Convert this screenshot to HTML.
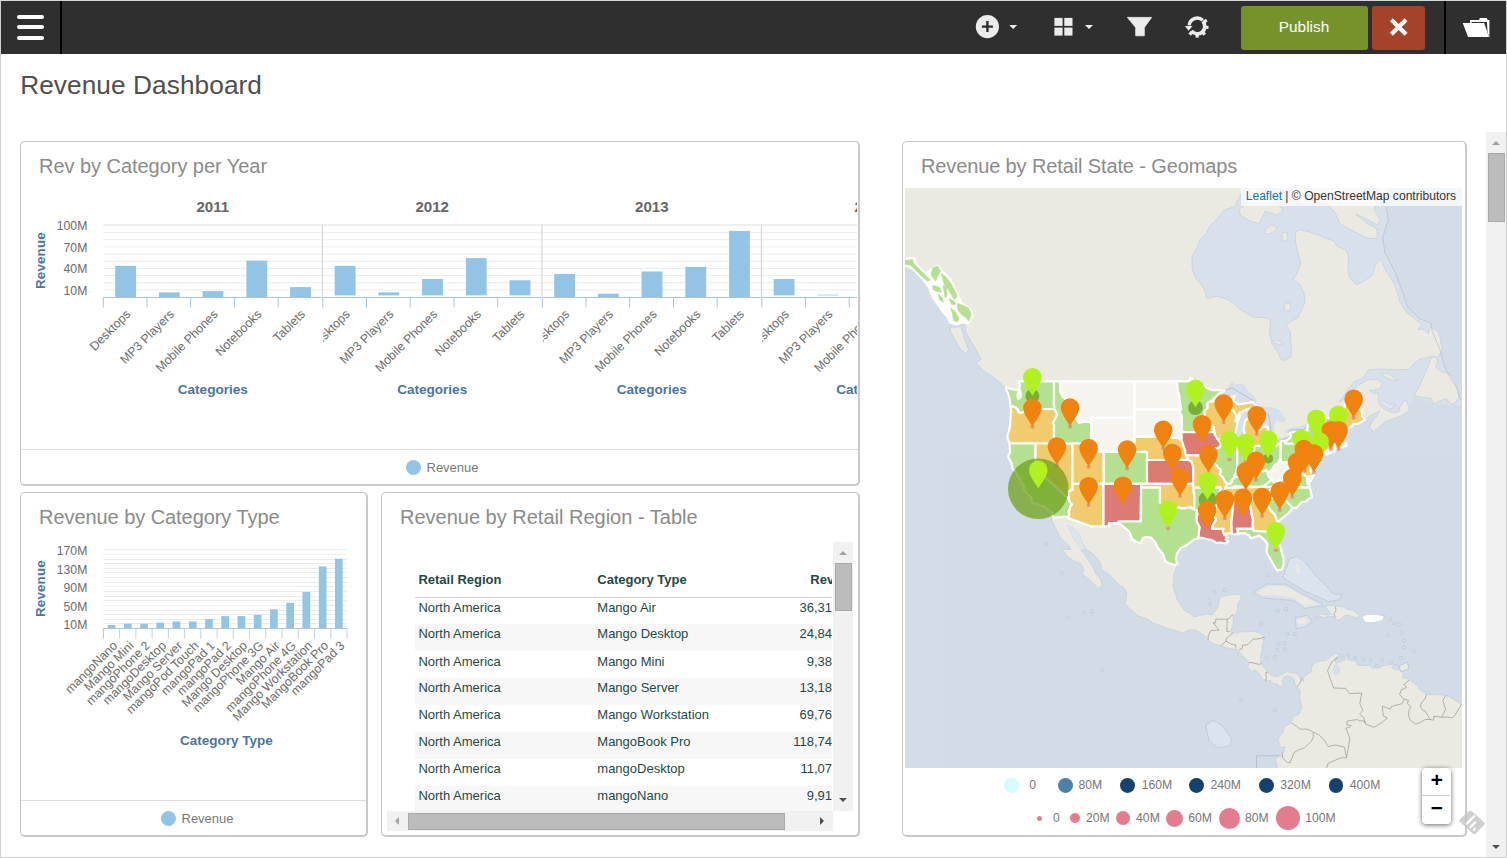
<!DOCTYPE html>
<html lang="en"><head><meta charset="utf-8"><title>Revenue Dashboard</title>
<style>
*{box-sizing:border-box;margin:0;padding:0}
html,body{width:1507px;height:858px;overflow:hidden;background:#fff;font-family:"Liberation Sans",Arial,sans-serif;}
body{position:relative}
.abs{position:absolute}
#frame{position:absolute;left:0;top:0;width:1507px;height:858px;border:1px solid #cfcfcf;border-top-color:#d8d8d8;pointer-events:none;z-index:50}
#nav{position:absolute;left:1px;top:1px;width:1505px;height:53px;background:#2f2f2f}
.sep{position:absolute;top:0;width:2px;height:53px;background:#000}
#title{position:absolute;left:20.2px;top:68px;font-size:26.25px;letter-spacing:.06px;line-height:34px;color:#4f4f4f;white-space:nowrap}
.panel{position:absolute;background:#fff;border:1px solid #c6c6c6;border-right:2px solid #c9c9c9;border-bottom:2px solid #c9c9c9;border-radius:5px}
.ptitle{position:absolute;left:18px;top:11.2px;font-size:20px;line-height:26px;color:#8b8b8b;white-space:nowrap}
.legline{position:absolute;left:0;right:0;height:1px;background:#dedede}
.legtxt{position:absolute;font-size:13px;line-height:15.4px;color:#777;white-space:nowrap}
.dot{position:absolute;border-radius:50%}
svg{position:absolute;overflow:hidden}
svg text{font-family:"Liberation Sans",Arial,sans-serif}
.btn{position:absolute;top:5px;height:44px;border-radius:3px;color:#fff;text-align:center}
table{border-collapse:collapse}
.sb{position:absolute;background:#f1f1f1}
.thumb{position:absolute;background:#bcbcbc;border:1px solid #a9a9a9}
.tri{position:absolute;width:0;height:0;border:4px solid transparent}
.trow{position:absolute;left:0;width:560px;white-space:nowrap;font-size:13px;color:#1f4848}
.trow span{position:absolute;top:0}
.zb{width:30.2px;height:27px;text-align:center;font:bold 21px/28.6px "Liberation Mono",monospace;color:#000}
</style></head><body>
<div id="nav">
<div class="abs" style="left:15.9px;top:14px;width:27px;height:4px;border-radius:2px;background:#fff"></div>
<div class="abs" style="left:15.9px;top:24px;width:27px;height:4px;border-radius:2px;background:#fff"></div>
<div class="abs" style="left:15.9px;top:34.5px;width:27px;height:4px;border-radius:2px;background:#fff"></div>
<div class="sep" style="left:59px"></div>
<svg style="left:0;top:0" width="1505" height="53" viewBox="1 1 1505 53">
<circle cx="987.4" cy="26.6" r="11.6" fill="#ececec"/>
<path d="M981.9 26.6h11M987.4 21.1v11" stroke="#2f2f2f" stroke-width="2.4" fill="none"/>
<path d="M1009.2 24.9h8l-4 4.1z" fill="#f2f2f2"/>
<rect x="1054.4" y="17.9" width="8.2" height="8" fill="#ececec"/>
<rect x="1054.4" y="27.6" width="8.2" height="8" fill="#ececec"/>
<rect x="1064.3" y="17.9" width="8.2" height="8" fill="#ececec"/>
<rect x="1064.3" y="27.6" width="8.2" height="8" fill="#ececec"/>
<path d="M1085 24.9h8l-4 4.1z" fill="#f2f2f2"/>
<path d="M1127.4 17.4h24.2l-7.3 10.2v8.2h-8.6v-8.2z" fill="#ececec" stroke="#ececec" stroke-width="0.8" stroke-linejoin="round"/>
<g fill="none" stroke="#ececec"><path d="M1189.14 25.44A8.2 8.2 0 0 1 1202.79 20.21" stroke-width="3.3"/><path d="M1202.87 21.28A7.5 7.5 0 1 1 1191.39 30.92" stroke-width="3.7"/></g><g fill="#ececec"><rect x="-1.7" y="-1.6" width="3.4" height="3.2" transform="translate(1205.35 21.07) rotate(-33)"/><rect x="-1.7" y="-1.6" width="3.4" height="3.2" transform="translate(1206.85 27.30) rotate(6)"/><rect x="-1.7" y="-1.6" width="3.4" height="3.2" transform="translate(1203.72 33.43) rotate(48)"/><rect x="-1.7" y="-1.6" width="3.4" height="3.2" transform="translate(1197.13 35.90) rotate(91)"/><rect x="-1.7" y="-1.6" width="3.4" height="3.2" transform="translate(1190.75 33.32) rotate(133)"/><path d="M1184.9 25.9h7.6l-3.9 4.9z"/></g>

<g fill="#fff">
<path d="M1462.7 23.1H1484.2L1489 36.9H1468.1z"/>
<path d="M1470 20.1H1479.2L1479.7 18.1H1486.8L1487.6 19.9H1489.4V36.9H1489L1487.5 31.4L1486.9 21.9H1471.6V23.1H1470z"/>
</g>

</svg>
<div class="btn" style="left:1240px;width:127px;background:#76932b;font-size:15.4px;line-height:42.6px;text-indent:-1px">Publish</div>
<div class="btn" style="left:1371px;width:53px;background:#a5432a"></div>
<svg style="left:1371px;top:5px" width="53" height="44" viewBox="1372 6 53 44"><path d="M1391.4 19.8l14.6 14.4M1406 19.8l-14.6 14.4" stroke="#fff" stroke-width="4.2" fill="none"/></svg>
<div class="sep" style="left:1443px"></div>
</div>
<div id="title">Revenue Dashboard</div>
<div class="panel" style="left:20px;top:141px;width:840px;height:345px"><div class="ptitle" style="letter-spacing:-0.04px">Rev by Category per Year</div>
<div class="legline" style="top:307px"></div><div class="dot" style="left:385px;top:318px;width:15px;height:15px;background:#92c4e5"></div><div class="legtxt" style="left:405.5px;top:317.5px">Revenue</div></div>
<svg style="left:21px;top:142px" width="836" height="307" viewBox="21 142 836 307">
<path d="M103.3 224.5H860" stroke="#efefef" stroke-width="1"/>
<path d="M103.3 289.93H860" stroke="#ececec" stroke-width="1"/>
<path d="M103.3 282.76H860" stroke="#ececec" stroke-width="1"/>
<path d="M103.3 275.59H860" stroke="#ececec" stroke-width="1"/>
<path d="M103.3 268.42H860" stroke="#ececec" stroke-width="1"/>
<path d="M103.3 261.25H860" stroke="#ececec" stroke-width="1"/>
<path d="M103.3 254.08H860" stroke="#ececec" stroke-width="1"/>
<path d="M103.3 246.91H860" stroke="#ececec" stroke-width="1"/>
<path d="M103.3 239.74H860" stroke="#ececec" stroke-width="1"/>
<path d="M103.3 232.57H860" stroke="#ececec" stroke-width="1"/>
<path d="M103.3 225.40H860" stroke="#ececec" stroke-width="1"/>
<rect x="115.2" y="265.9" width="20.8" height="31.1" fill="#92c4e5"/>
<rect x="158.9" y="292.4" width="20.8" height="4.6" fill="#92c4e5"/>
<rect x="202.6" y="291.1" width="20.8" height="5.9" fill="#92c4e5"/>
<rect x="246.4" y="260.6" width="20.8" height="36.4" fill="#92c4e5"/>
<rect x="290.1" y="287.1" width="20.8" height="9.9" fill="#92c4e5"/>
<path d="M103.3 297.5H321.6" stroke="#a9c4df" stroke-width="1"/>
<path d="M103.3 297.5V307.5" stroke="#a9c4df" stroke-width="1"/>
<path d="M147.0 297.5V307.5" stroke="#a9c4df" stroke-width="1"/>
<path d="M190.7 297.5V307.5" stroke="#a9c4df" stroke-width="1"/>
<path d="M234.5 297.5V307.5" stroke="#a9c4df" stroke-width="1"/>
<path d="M278.2 297.5V307.5" stroke="#a9c4df" stroke-width="1"/>
<text x="212.8" y="212" text-anchor="middle" font-size="15.1" font-weight="bold" fill="#666">2011</text>
<text x="212.8" y="393.7" text-anchor="middle" font-size="13.55" font-weight="bold" fill="#4a74a3">Categories</text>
<clipPath id="c1p0"><rect x="103.8" y="298" width="219.5" height="80"/></clipPath>
<g>
<text transform="translate(131.2 314.9) rotate(-45)" text-anchor="end" font-size="12.4" fill="#6b6b6b">Desktops</text>
<text transform="translate(174.9 314.9) rotate(-45)" text-anchor="end" font-size="12.4" fill="#6b6b6b">MP3 Players</text>
<text transform="translate(218.6 314.9) rotate(-45)" text-anchor="end" font-size="12.4" fill="#6b6b6b">Mobile Phones</text>
<text transform="translate(262.3 314.9) rotate(-45)" text-anchor="end" font-size="12.4" fill="#6b6b6b">Notebooks</text>
<text transform="translate(306.0 314.9) rotate(-45)" text-anchor="end" font-size="12.4" fill="#6b6b6b">Tablets</text>
</g>
<path d="M322.4 224.5V297.5" stroke="#cfcfcf" stroke-width="1"/>
<rect x="334.7" y="265.9" width="20.8" height="29.5" fill="#92c4e5"/>
<rect x="378.4" y="292.4" width="20.8" height="3.0" fill="#92c4e5"/>
<rect x="422.1" y="279.0" width="20.8" height="16.4" fill="#92c4e5"/>
<rect x="465.9" y="258.1" width="20.8" height="37.3" fill="#92c4e5"/>
<rect x="509.6" y="280.3" width="20.8" height="15.1" fill="#92c4e5"/>
<path d="M322.8 297.5H541.1" stroke="#a9c4df" stroke-width="1"/>
<path d="M322.8 297.5V307.5" stroke="#a9c4df" stroke-width="1"/>
<path d="M366.5 297.5V307.5" stroke="#a9c4df" stroke-width="1"/>
<path d="M410.2 297.5V307.5" stroke="#a9c4df" stroke-width="1"/>
<path d="M454.0 297.5V307.5" stroke="#a9c4df" stroke-width="1"/>
<path d="M497.7 297.5V307.5" stroke="#a9c4df" stroke-width="1"/>
<text x="432.2" y="212" text-anchor="middle" font-size="15.1" font-weight="bold" fill="#666">2012</text>
<text x="432.2" y="393.7" text-anchor="middle" font-size="13.55" font-weight="bold" fill="#4a74a3">Categories</text>
<clipPath id="c1p1"><rect x="323.3" y="298" width="219.5" height="80"/></clipPath>
<g clip-path="url(#c1p1)">
<text transform="translate(350.7 314.9) rotate(-45)" text-anchor="end" font-size="12.4" fill="#6b6b6b">Desktops</text>
<text transform="translate(394.4 314.9) rotate(-45)" text-anchor="end" font-size="12.4" fill="#6b6b6b">MP3 Players</text>
<text transform="translate(438.1 314.9) rotate(-45)" text-anchor="end" font-size="12.4" fill="#6b6b6b">Mobile Phones</text>
<text transform="translate(481.8 314.9) rotate(-45)" text-anchor="end" font-size="12.4" fill="#6b6b6b">Notebooks</text>
<text transform="translate(525.5 314.9) rotate(-45)" text-anchor="end" font-size="12.4" fill="#6b6b6b">Tablets</text>
</g>
<path d="M541.9 224.5V297.5" stroke="#cfcfcf" stroke-width="1"/>
<rect x="554.2" y="274.0" width="20.8" height="23.0" fill="#92c4e5"/>
<rect x="597.9" y="293.7" width="20.8" height="3.3" fill="#92c4e5"/>
<rect x="641.6" y="271.5" width="20.8" height="25.5" fill="#92c4e5"/>
<rect x="685.4" y="266.9" width="20.8" height="30.1" fill="#92c4e5"/>
<rect x="729.1" y="230.9" width="20.8" height="66.1" fill="#92c4e5"/>
<path d="M542.3 297.5H760.6" stroke="#a9c4df" stroke-width="1"/>
<path d="M542.3 297.5V307.5" stroke="#a9c4df" stroke-width="1"/>
<path d="M586.0 297.5V307.5" stroke="#a9c4df" stroke-width="1"/>
<path d="M629.7 297.5V307.5" stroke="#a9c4df" stroke-width="1"/>
<path d="M673.5 297.5V307.5" stroke="#a9c4df" stroke-width="1"/>
<path d="M717.2 297.5V307.5" stroke="#a9c4df" stroke-width="1"/>
<text x="651.8" y="212" text-anchor="middle" font-size="15.1" font-weight="bold" fill="#666">2013</text>
<text x="651.8" y="393.7" text-anchor="middle" font-size="13.55" font-weight="bold" fill="#4a74a3">Categories</text>
<clipPath id="c1p2"><rect x="542.8" y="298" width="219.5" height="80"/></clipPath>
<g clip-path="url(#c1p2)">
<text transform="translate(570.2 314.9) rotate(-45)" text-anchor="end" font-size="12.4" fill="#6b6b6b">Desktops</text>
<text transform="translate(613.9 314.9) rotate(-45)" text-anchor="end" font-size="12.4" fill="#6b6b6b">MP3 Players</text>
<text transform="translate(657.6 314.9) rotate(-45)" text-anchor="end" font-size="12.4" fill="#6b6b6b">Mobile Phones</text>
<text transform="translate(701.3 314.9) rotate(-45)" text-anchor="end" font-size="12.4" fill="#6b6b6b">Notebooks</text>
<text transform="translate(745.0 314.9) rotate(-45)" text-anchor="end" font-size="12.4" fill="#6b6b6b">Tablets</text>
</g>
<path d="M761.4 224.5V297.5" stroke="#cfcfcf" stroke-width="1"/>
<rect x="773.7" y="279.0" width="20.8" height="16.4" fill="#92c4e5"/>
<rect x="817.4" y="294.7" width="20.8" height="0.7" fill="#92c4e5"/>
<path d="M761.8 297.5H980.1" stroke="#a9c4df" stroke-width="1"/>
<path d="M761.8 297.5V307.5" stroke="#a9c4df" stroke-width="1"/>
<path d="M805.5 297.5V307.5" stroke="#a9c4df" stroke-width="1"/>
<path d="M849.2 297.5V307.5" stroke="#a9c4df" stroke-width="1"/>
<path d="M893.0 297.5V307.5" stroke="#a9c4df" stroke-width="1"/>
<path d="M936.7 297.5V307.5" stroke="#a9c4df" stroke-width="1"/>
<path d="M979.8 297.5V307.5" stroke="#a9c4df" stroke-width="1"/>
<text x="871.2" y="212" text-anchor="middle" font-size="15.1" font-weight="bold" fill="#666">2014</text>
<text x="871.2" y="393.7" text-anchor="middle" font-size="13.55" font-weight="bold" fill="#4a74a3">Categories</text>
<clipPath id="c1p3"><rect x="762.3" y="298" width="219.5" height="80"/></clipPath>
<g clip-path="url(#c1p3)">
<text transform="translate(789.7 314.9) rotate(-45)" text-anchor="end" font-size="12.4" fill="#6b6b6b">Desktops</text>
<text transform="translate(833.4 314.9) rotate(-45)" text-anchor="end" font-size="12.4" fill="#6b6b6b">MP3 Players</text>
<text transform="translate(877.1 314.9) rotate(-45)" text-anchor="end" font-size="12.4" fill="#6b6b6b">Mobile Phones</text>
<text transform="translate(920.8 314.9) rotate(-45)" text-anchor="end" font-size="12.4" fill="#6b6b6b">Notebooks</text>
<text transform="translate(964.5 314.9) rotate(-45)" text-anchor="end" font-size="12.4" fill="#6b6b6b">Tablets</text>
</g>
<text x="87.3" y="230.2" text-anchor="end" font-size="12.2" fill="#6b6b6b">100M</text>
<text x="87.3" y="251.7" text-anchor="end" font-size="12.2" fill="#6b6b6b">70M</text>
<text x="87.3" y="273.2" text-anchor="end" font-size="12.2" fill="#6b6b6b">40M</text>
<text x="87.3" y="294.7" text-anchor="end" font-size="12.2" fill="#6b6b6b">10M</text>
<text transform="translate(44.6 260.6) rotate(-90)" text-anchor="middle" letter-spacing="0.2" font-size="13.3" font-weight="bold" fill="#4a74a3">Revenue</text>
</svg>
<div class="panel" style="left:20px;top:492px;width:348px;height:345px"><div class="ptitle" style="letter-spacing:-0.06px">Revenue by Category Type</div>
<div class="legline" style="top:307px"></div><div class="dot" style="left:140px;top:318px;width:15px;height:15px;background:#92c4e5"></div><div class="legtxt" style="left:160.5px;top:317.5px">Revenue</div></div>
<svg style="left:21px;top:493px" width="345" height="307" viewBox="21 493 345 307">
<path d="M103.4 623.5H347.0" stroke="#ececec" stroke-width="1"/>
<path d="M103.4 619.5H347.0" stroke="#ececec" stroke-width="1"/>
<path d="M103.4 614.5H347.0" stroke="#ececec" stroke-width="1"/>
<path d="M103.4 610.5H347.0" stroke="#ececec" stroke-width="1"/>
<path d="M103.4 605.5H347.0" stroke="#ececec" stroke-width="1"/>
<path d="M103.4 600.5H347.0" stroke="#ececec" stroke-width="1"/>
<path d="M103.4 596.5H347.0" stroke="#ececec" stroke-width="1"/>
<path d="M103.4 591.5H347.0" stroke="#ececec" stroke-width="1"/>
<path d="M103.4 586.5H347.0" stroke="#ececec" stroke-width="1"/>
<path d="M103.4 582.5H347.0" stroke="#ececec" stroke-width="1"/>
<path d="M103.4 577.5H347.0" stroke="#ececec" stroke-width="1"/>
<path d="M103.4 572.5H347.0" stroke="#ececec" stroke-width="1"/>
<path d="M103.4 568.5H347.0" stroke="#ececec" stroke-width="1"/>
<path d="M103.4 563.5H347.0" stroke="#ececec" stroke-width="1"/>
<path d="M103.4 559.5H347.0" stroke="#ececec" stroke-width="1"/>
<path d="M103.4 554.5H347.0" stroke="#ececec" stroke-width="1"/>
<path d="M103.4 549.5H347.0" stroke="#ececec" stroke-width="1"/>
<rect x="107.7" y="625.0" width="7.7" height="3.0" fill="#92c4e5"/>
<rect x="123.9" y="623.8" width="7.7" height="4.2" fill="#92c4e5"/>
<rect x="140.2" y="623.8" width="7.7" height="4.2" fill="#92c4e5"/>
<rect x="156.4" y="622.6" width="7.7" height="5.4" fill="#92c4e5"/>
<rect x="172.6" y="621.5" width="7.7" height="6.5" fill="#92c4e5"/>
<rect x="188.9" y="621.5" width="7.7" height="6.5" fill="#92c4e5"/>
<rect x="205.1" y="619.1" width="7.7" height="8.9" fill="#92c4e5"/>
<rect x="221.3" y="616.1" width="7.7" height="11.9" fill="#92c4e5"/>
<rect x="237.6" y="616.1" width="7.7" height="11.9" fill="#92c4e5"/>
<rect x="253.8" y="614.9" width="7.7" height="13.1" fill="#92c4e5"/>
<rect x="270.1" y="609.3" width="7.7" height="18.7" fill="#92c4e5"/>
<rect x="286.3" y="602.8" width="7.7" height="25.2" fill="#92c4e5"/>
<rect x="302.5" y="591.9" width="7.7" height="36.1" fill="#92c4e5"/>
<rect x="318.8" y="566.5" width="7.7" height="61.5" fill="#92c4e5"/>
<rect x="335.0" y="558.8" width="7.7" height="69.2" fill="#92c4e5"/>
<path d="M103.4 628.5H347.0" stroke="#a9c4df" stroke-width="1"/>
<path d="M103.4 628.5V638.5" stroke="#a9c4df" stroke-width="1" opacity="1"/>
<path d="M119.6 628.5V638.5" stroke="#a9c4df" stroke-width="1" opacity="0.75"/>
<path d="M135.9 628.5V638.5" stroke="#a9c4df" stroke-width="1" opacity="0.75"/>
<path d="M152.1 628.5V638.5" stroke="#a9c4df" stroke-width="1" opacity="0.75"/>
<path d="M168.4 628.5V638.5" stroke="#a9c4df" stroke-width="1" opacity="0.75"/>
<path d="M184.6 628.5V638.5" stroke="#a9c4df" stroke-width="1" opacity="0.75"/>
<path d="M200.8 628.5V638.5" stroke="#a9c4df" stroke-width="1" opacity="0.75"/>
<path d="M217.1 628.5V638.5" stroke="#a9c4df" stroke-width="1" opacity="0.75"/>
<path d="M233.3 628.5V638.5" stroke="#a9c4df" stroke-width="1" opacity="0.75"/>
<path d="M249.6 628.5V638.5" stroke="#a9c4df" stroke-width="1" opacity="0.75"/>
<path d="M265.8 628.5V638.5" stroke="#a9c4df" stroke-width="1" opacity="0.75"/>
<path d="M282.0 628.5V638.5" stroke="#a9c4df" stroke-width="1" opacity="0.75"/>
<path d="M298.3 628.5V638.5" stroke="#a9c4df" stroke-width="1" opacity="0.75"/>
<path d="M314.5 628.5V638.5" stroke="#a9c4df" stroke-width="1" opacity="0.75"/>
<path d="M330.8 628.5V638.5" stroke="#a9c4df" stroke-width="1" opacity="0.75"/>
<path d="M347.0 628.5V638.5" stroke="#a9c4df" stroke-width="1" opacity="0.75"/>
<text transform="translate(118.1 646.4) rotate(-45)" text-anchor="end" font-size="12.4" fill="#6b6b6b">mangoNano</text>
<text transform="translate(134.4 646.4) rotate(-45)" text-anchor="end" font-size="12.4" fill="#6b6b6b">Mango Mini</text>
<text transform="translate(150.6 646.4) rotate(-45)" text-anchor="end" font-size="12.4" fill="#6b6b6b">mangoPhone 2</text>
<text transform="translate(166.8 646.4) rotate(-45)" text-anchor="end" font-size="12.4" fill="#6b6b6b">mangoDesktop</text>
<text transform="translate(183.1 646.4) rotate(-45)" text-anchor="end" font-size="12.4" fill="#6b6b6b">Mango Server</text>
<text transform="translate(199.3 646.4) rotate(-45)" text-anchor="end" font-size="12.4" fill="#6b6b6b">mangoPod Touch</text>
<text transform="translate(215.6 646.4) rotate(-45)" text-anchor="end" font-size="12.4" fill="#6b6b6b">mangoPad 1</text>
<text transform="translate(231.8 646.4) rotate(-45)" text-anchor="end" font-size="12.4" fill="#6b6b6b">mangoPad 2</text>
<text transform="translate(248.0 646.4) rotate(-45)" text-anchor="end" font-size="12.4" fill="#6b6b6b">Mango Desktop</text>
<text transform="translate(264.3 646.4) rotate(-45)" text-anchor="end" font-size="12.4" fill="#6b6b6b">mangoPhone 3G</text>
<text transform="translate(280.5 646.4) rotate(-45)" text-anchor="end" font-size="12.4" fill="#6b6b6b">Mango Air</text>
<text transform="translate(296.8 646.4) rotate(-45)" text-anchor="end" font-size="12.4" fill="#6b6b6b">mangoPhone 4G</text>
<text transform="translate(313.0 646.4) rotate(-45)" text-anchor="end" font-size="12.4" fill="#6b6b6b">Mango Workstation</text>
<text transform="translate(329.2 646.4) rotate(-45)" text-anchor="end" font-size="12.4" fill="#6b6b6b">MangoBook Pro</text>
<text transform="translate(345.5 646.4) rotate(-45)" text-anchor="end" font-size="12.4" fill="#6b6b6b">mangoPad 3</text>
<text x="87.3" y="555.2" text-anchor="end" font-size="12.2" fill="#6b6b6b">170M</text>
<text x="87.3" y="573.7" text-anchor="end" font-size="12.2" fill="#6b6b6b">130M</text>
<text x="87.3" y="592.2" text-anchor="end" font-size="12.2" fill="#6b6b6b">90M</text>
<text x="87.3" y="610.7" text-anchor="end" font-size="12.2" fill="#6b6b6b">50M</text>
<text x="87.3" y="629.2" text-anchor="end" font-size="12.2" fill="#6b6b6b">10M</text>
<text transform="translate(44.6 588.6) rotate(-90)" text-anchor="middle" letter-spacing="0.2" font-size="13.3" font-weight="bold" fill="#4a74a3">Revenue</text>
<text x="226.3" y="744.9" text-anchor="middle" font-size="13.5" font-weight="bold" fill="#4a74a3">Category Type</text>
</svg>
<div class="panel" style="left:381px;top:492px;width:479px;height:345px"><div class="ptitle">Revenue by Retail Region - Table</div>
<div class="abs" style="left:5px;top:49px;width:466px;height:289px;overflow:hidden">
<div class="abs" style="left:0;top:0;width:445px;height:269px;overflow:hidden">
<div class="trow" style="top:28.8px;height:26px;line-height:18px;font-weight:bold;left:28px"><span style="left:3.4px">Retail Region</span><span style="left:182.3px">Category Type</span><span style="right:110.5px">Revenue</span></div>
<div class="abs" style="left:28px;top:55px;width:520px;height:1px;background:#cfcfcf"></div>
<div class="trow" style="left:28px;top:56px;height:26.299999999999997px;background:#fff;line-height:18px"><span style="left:3.4px;top:1.0px">North America</span><span style="left:182.3px;top:1.0px">Mango Air</span><span style="right:110.5px;top:1.0px">36,317,506</span></div>
<div class="trow" style="left:28px;top:82.3px;height:27.200000000000003px;background:#f7f7f7;line-height:18px"><span style="left:3.4px;top:0.8px">North America</span><span style="left:182.3px;top:0.8px">Mango Desktop</span><span style="right:110.5px;top:0.8px">24,846,331</span></div>
<div class="trow" style="left:28px;top:109.5px;height:26.5px;background:#fff;line-height:18px"><span style="left:3.4px;top:1.2px">North America</span><span style="left:182.3px;top:1.2px">Mango Mini</span><span style="right:110.5px;top:1.2px">9,384,275</span></div>
<div class="trow" style="left:28px;top:136px;height:27px;background:#f7f7f7;line-height:18px"><span style="left:3.4px;top:0.6px">North America</span><span style="left:182.3px;top:0.6px">Mango Server</span><span style="right:110.5px;top:0.6px">13,186,940</span></div>
<div class="trow" style="left:28px;top:163px;height:27px;background:#fff;line-height:18px"><span style="left:3.4px;top:0.6px">North America</span><span style="left:182.3px;top:0.6px">Mango Workstation</span><span style="right:110.5px;top:0.6px">69,764,212</span></div>
<div class="trow" style="left:28px;top:190px;height:27px;background:#f7f7f7;line-height:18px"><span style="left:3.4px;top:0.6px">North America</span><span style="left:182.3px;top:0.6px">MangoBook Pro</span><span style="right:110.5px;top:0.6px">118,747,903</span></div>
<div class="trow" style="left:28px;top:217px;height:27px;background:#fff;line-height:18px"><span style="left:3.4px;top:0.6px">North America</span><span style="left:182.3px;top:0.6px">mangoDesktop</span><span style="right:110.5px;top:0.6px">11,075,628</span></div>
<div class="trow" style="left:28px;top:244px;height:27px;background:#f7f7f7;line-height:18px"><span style="left:3.4px;top:0.6px">North America</span><span style="left:182.3px;top:0.6px">mangoNano</span><span style="right:110.5px;top:0.6px">9,916,454</span></div>
</div>
<div class="sb" style="left:446px;top:0;width:20px;height:269px"><div class="tri" style="left:6.4px;top:5px;border-bottom:4.5px solid #a3a3a3"></div><div class="thumb" style="left:2px;top:21px;width:17px;height:48px"></div><div class="tri" style="left:6.4px;top:256px;border-top:4.5px solid #505050"></div></div>
<div class="sb" style="left:0;top:269px;width:446px;height:20px"><div class="tri" style="left:4px;top:6.4px;border-right:4.5px solid #a3a3a3"></div><div class="thumb" style="left:21px;top:2px;width:377px;height:17px"></div><div class="tri" style="left:433px;top:6.4px;border-left:4.5px solid #505050"></div></div>
</div>
</div>
<div class="panel" style="left:902px;top:141px;width:565px;height:696px"><div class="ptitle" style="letter-spacing:-0.125px">Revenue by Retail State - Geomaps</div></div>
<svg id="map" style="left:905px;top:188px" width="557" height="580" viewBox="905 188 557 580">
<rect x="905" y="188" width="557" height="580" fill="#d3dde7"/>
<rect x="940.7" y="452.4" width="600" height="400" fill="#d1dce7"/>
<path d="M1386.4 206.5L1388.2 220.1L1382.7 237.4L1384.7 252.3L1395.1 272.0L1402.5 291.8L1407.4 306.6L1419.8 319.0L1430.9 322.7L1432.2 331.4L1439.6 348.7L1444.5 366.0L1450.7 378.3L1456.9 388.2L1460.6 400.1L1462.0 405.0L1454.5 405.0L1435.0 404.0L1414.0 397.0L1409.0 409.0L1340.0 425.0L1185.0 425.0L1185.0 188.0L1386.0 188.0Z" fill="#d8e1eb"/>
<g fill="#dbe4ed" stroke="#b9c6d7" stroke-width="0.8" stroke-linejoin="round">
<path d="M1253.4 592.3L1266.8 584.2L1285.6 584.2L1301.7 593.6L1320.5 603.0L1323.1 605.7L1304.4 608.4L1293.6 600.3L1274.9 599.0L1261.5 597.7Z"/>
<path d="M1282.9 577.5L1289.6 558.8L1297.7 556.1L1305.7 562.8L1315.1 574.9L1328.5 588.3L1332.5 593.6L1341.9 595.0L1339.8 599.5L1328.5 601.7L1320.5 597.7L1304.4 591.0L1291.0 582.9Z"/>
<path d="M1295.0 617.8L1307.0 615.1L1312.4 621.8L1304.4 627.2L1296.3 628.5Z"/>
<path d="M1205.6 725.0L1213.6 720.2L1223.0 726.3L1231.6 738.4L1229.7 745.9L1217.7 747.8L1209.1 741.1Z"/>
<path d="M1398.8 666.0L1407.6 662.0L1408.9 668.7L1400.9 671.9Z"/>
<circle cx="1383.5" cy="616.4" r="1.5"/>
<circle cx="1390.2" cy="619.1" r="1.5"/>
<circle cx="1394.2" cy="623.1" r="1.5"/>
<circle cx="1399.6" cy="624.5" r="1.5"/>
<circle cx="1401.7" cy="632.5" r="1.5"/>
<circle cx="1404.1" cy="640.6" r="1.5"/>
<circle cx="1404.1" cy="647.3" r="1.5"/>
<circle cx="1400.9" cy="658.0" r="1.5"/>
<circle cx="1413.8" cy="651.3" r="1.5"/>
<circle cx="1388.3" cy="634.7" r="1.5"/>
<circle cx="1382.1" cy="659.9" r="1.5"/>
<circle cx="1391.5" cy="663.4" r="1.5"/>
<circle cx="1376.8" cy="666.0" r="1.5"/>
<circle cx="1341.9" cy="655.8" r="1.5"/>
<circle cx="1348.6" cy="655.3" r="1.5"/>
<circle cx="1355.8" cy="658.0" r="1.5"/>
<circle cx="1363.4" cy="659.3" r="1.5"/>
<circle cx="1370.9" cy="660.1" r="1.5"/>
<circle cx="1277.5" cy="611.1" r="1.5"/>
<circle cx="1286.1" cy="609.2" r="1.5"/>
<circle cx="1260.9" cy="623.9" r="1.5"/>
<circle cx="1287.7" cy="634.4" r="1.5"/>
<circle cx="1294.4" cy="633.9" r="1.5"/>
<circle cx="1278.3" cy="644.0" r="1.5"/>
<circle cx="1284.2" cy="643.2" r="1.5"/>
<circle cx="1277.0" cy="649.9" r="1.5"/>
<circle cx="1285.1" cy="649.1" r="1.5"/>
<circle cx="1274.9" cy="656.7" r="1.5"/>
<circle cx="1316.4" cy="617.8" r="1.5"/>
<circle cx="1266.8" cy="657.2" r="1.5"/>
<circle cx="1275.4" cy="709.8" r="1.5"/>
<circle cx="1268.2" cy="574.9" r="1.5"/>
<circle cx="1045.5" cy="544.0" r="1.5"/>
<circle cx="1061.6" cy="573.0" r="1.5"/>
<circle cx="1067.5" cy="617.7" r="1.5"/>
<circle cx="1084.4" cy="612.9" r="1.5"/>
<circle cx="1091.7" cy="614.5" r="1.5"/>
<circle cx="1092.2" cy="611.0" r="1.5"/>
<circle cx="1102.4" cy="670.0" r="1.5"/>
<circle cx="1209.1" cy="600.3" r="1.5"/>
<circle cx="1214.2" cy="592.3" r="1.5"/>
<circle cx="1224.9" cy="590.1" r="1.5"/>
<circle cx="1210.2" cy="605.1" r="1.5"/>
<circle cx="1261.1" cy="623.9" r="1.5"/>
<circle cx="1277.5" cy="611.0" r="1.5"/>
<circle cx="1286.0" cy="608.9" r="1.5"/>
<circle cx="1287.4" cy="634.4" r="1.5"/>
<circle cx="1294.6" cy="633.8" r="1.5"/>
<circle cx="1275.3" cy="709.4" r="1.5"/>
<circle cx="1241.3" cy="700.1" r="1.5"/>
</g>
<g fill="#ebeae2" stroke="#c2cedc" stroke-opacity="0.8" stroke-width="0.9" stroke-linejoin="round">
<path d="M873.9 250.1L905.0 266.0L912.0 269.0L921.8 278.2L929.2 288.4L933.0 297.8L942.3 311.7L946.9 316.4L949.7 322.9L956.2 324.8L964.6 323.8L966.5 333.2L973.9 346.2L981.4 359.2L975.8 363.0L983.3 370.4L994.4 377.9L1003.0 385.5L1006.1 387.2L1006.1 387.2L1006.3 389.8L1008.2 393.5L1009.4 398.1L1010.0 400.8L1010.2 403.1L1010.5 406.7L1010.5 406.7L1011.0 409.0L1011.0 413.4L1010.3 420.5L1010.0 426.5L1008.8 431.7L1007.2 436.5L1008.2 439.3L1009.4 443.5L1009.4 443.5L1009.7 447.7L1010.0 452.2L1008.2 456.3L1008.8 458.0L1011.9 464.0L1012.5 468.9L1016.9 473.6L1017.2 476.0L1020.0 478.0L1020.6 482.3L1022.4 484.2L1024.3 485.4L1023.4 486.9L1023.7 489.2L1027.4 493.9L1031.5 498.1L1031.6 502.2L1032.7 503.3L1038.0 503.7L1040.5 505.6L1044.5 506.5L1045.4 507.5L1046.1 508.8L1049.2 510.1L1052.3 512.7L1052.6 515.3L1053.4 517.7L1053.4 517.7L1050.8 518.6L1054.4 525.6L1060.8 538.5L1068.5 544.9L1071.0 549.4L1062.0 549.4L1067.2 556.4L1074.9 561.5L1081.3 564.1L1083.8 569.2L1082.6 574.4L1087.7 578.2L1094.1 584.6L1098.0 588.5L1102.4 584.6L1099.9 578.2L1095.4 573.1L1092.8 566.7L1087.7 559.0L1081.3 550.0L1083.8 548.1L1074.9 541.0L1068.5 526.9L1067.2 525.6L1072.3 527.6L1078.7 533.3L1082.6 543.6L1086.4 549.4L1092.8 553.8L1100.5 562.8L1101.8 569.9L1109.5 574.4L1117.2 583.3L1124.3 588.1L1126.8 594.1L1125.6 601.4L1124.3 602.1L1128.7 608.0L1133.0 611.3L1138.0 615.9L1146.1 618.5L1153.5 623.1L1160.4 625.4L1169.1 628.9L1178.4 631.5L1183.4 632.8L1189.6 629.9L1195.8 629.9L1203.3 634.7L1208.2 640.2L1213.8 644.1L1221.3 645.7L1228.1 648.2L1234.3 649.2L1236.2 648.8L1238.1 650.8L1243.0 655.9L1248.0 661.6L1248.6 663.5L1247.7 667.9L1252.3 671.7L1254.8 669.8L1259.2 673.6L1261.7 678.6L1265.4 679.8L1266.0 681.4L1270.4 680.2L1273.5 683.6L1277.8 684.2L1278.4 686.4L1281.5 686.1L1284.0 684.2L1281.5 680.5L1284.7 676.7L1287.1 675.8L1290.9 676.7L1294.0 679.2L1295.2 684.2L1297.1 686.7L1300.2 690.5L1299.6 696.7L1300.8 703.6L1302.0 707.3L1298.9 714.2L1293.4 716.1L1291.5 721.0L1290.2 724.1L1284.7 725.7L1283.4 731.6L1280.9 734.7L1278.4 738.1L1279.1 744.0L1277.8 745.3L1282.2 747.8L1284.7 746.5L1284.0 752.1L1281.5 753.0L1276.0 758.3L1275.8 760.7L1277.2 764.0L1276.9 768.3L1278.4 770.8L1284.0 787.8L1495.3 787.8L1495.3 713.0L1461.1 704.2L1459.2 703.0L1456.1 701.1L1451.8 698.0L1445.6 695.5L1438.7 694.6L1433.2 694.9L1426.3 694.6L1423.8 692.4L1419.5 689.2L1417.0 685.5L1409.5 679.8L1408.3 678.3L1402.7 678.0L1403.3 672.9L1398.4 669.8L1394.0 669.1L1391.5 667.3L1394.0 666.0L1396.5 664.7L1389.7 664.7L1382.2 666.0L1379.1 667.9L1372.3 667.9L1369.8 665.4L1364.8 665.4L1357.3 665.4L1356.1 661.6L1348.0 659.7L1347.4 655.2L1344.9 656.5L1346.2 659.0L1344.9 660.3L1338.1 662.8L1336.2 663.1L1334.4 659.0L1338.1 656.5L1339.3 653.6L1335.9 653.6L1332.5 655.2L1328.1 659.0L1325.7 660.9L1320.1 660.9L1316.0 662.2L1313.2 664.4L1311.7 666.6L1311.4 671.7L1307.6 674.2L1303.3 678.0L1303.9 681.7L1300.5 677.6L1297.1 673.6L1290.9 672.3L1286.5 671.7L1284.7 673.2L1279.1 676.1L1274.7 676.7L1270.4 674.8L1267.9 672.0L1265.4 669.1L1261.7 664.1L1261.0 662.8L1260.4 656.5L1262.3 650.8L1262.9 643.7L1264.1 638.0L1264.5 637.3L1259.2 632.5L1253.0 631.2L1246.7 631.8L1237.4 632.2L1233.1 632.8L1228.7 631.5L1230.6 630.9L1233.1 625.0L1233.1 621.1L1233.7 615.3L1235.6 615.9L1237.4 609.3L1237.7 603.4L1241.8 596.8L1239.9 594.4L1233.1 594.4L1223.1 596.1L1219.4 598.1L1218.8 605.4L1215.7 610.0L1212.6 614.6L1206.4 613.9L1198.3 615.9L1193.9 616.9L1189.6 613.3L1185.2 611.3L1184.0 610.0L1180.9 604.7L1177.2 600.1L1175.9 594.1L1173.4 589.4L1173.4 581.3L1174.1 574.5L1175.9 569.0L1177.5 564.5L1177.5 564.5L1175.9 558.7L1177.2 553.1L1180.9 548.1L1185.2 546.0L1190.2 542.5L1192.7 540.3L1198.0 538.2L1198.0 538.2L1202.0 537.7L1207.6 539.3L1210.7 539.6L1213.8 541.1L1216.3 542.8L1220.7 542.5L1225.6 543.5L1228.1 541.8L1225.6 539.6L1226.9 538.2L1225.6 535.7L1224.4 534.6L1224.4 534.6L1228.1 533.2L1231.8 533.5L1231.8 533.5L1234.3 534.4L1237.4 533.9L1237.4 533.9L1244.9 533.2L1248.9 535.3L1251.1 538.3L1257.0 536.4L1259.2 535.3L1262.9 538.6L1266.6 542.1L1267.6 545.3L1266.3 551.0L1267.3 553.8L1271.3 560.7L1273.5 564.9L1277.2 570.3L1281.5 569.7L1283.4 565.6L1283.7 558.7L1281.9 553.1L1280.6 547.1L1278.4 543.2L1276.0 537.5L1275.0 530.9L1275.0 530.9L1276.6 525.2L1278.7 521.3L1278.7 521.3L1281.2 519.0L1284.7 516.4L1289.0 512.7L1293.0 507.8L1293.0 507.8L1296.8 507.9L1298.9 505.2L1302.0 501.8L1305.8 501.5L1308.9 498.8L1312.0 497.3L1310.4 490.0L1309.7 487.3L1309.7 487.3L1308.9 484.6L1307.0 483.8L1307.0 479.9L1307.3 476.8L1307.3 476.8L1309.5 476.4L1308.9 481.5L1309.2 482.9L1311.4 479.5L1313.5 475.8L1314.8 472.4L1314.5 469.7L1312.6 465.7L1311.7 463.2L1312.6 461.6L1312.6 461.6L1311.7 463.2L1313.9 465.7L1315.7 468.6L1318.8 464.8L1320.7 462.0L1321.3 456.3L1319.8 455.9L1321.3 454.3L1321.9 451.8L1323.5 451.8L1323.5 451.8L1328.1 449.6L1334.6 449.2L1334.6 449.2L1336.8 448.8L1339.2 447.7L1339.2 447.7L1342.4 447.3L1346.5 446.0L1344.9 442.9L1346.2 443.1L1346.2 445.2L1343.1 445.2L1342.1 443.5L1340.0 440.6L1342.4 438.1L1341.1 436.2L1341.1 436.2L1341.8 434.5L1341.8 434.5L1342.4 434.3L1344.6 430.0L1347.4 428.7L1351.8 426.5L1353.6 423.9L1357.3 423.9L1361.1 422.2L1365.1 419.4L1370.4 415.6L1377.2 412.5L1379.7 410.3L1377.9 414.7L1372.3 421.3L1369.8 426.5L1371.6 430.0L1373.5 431.3L1378.5 427.4L1385.9 421.3L1395.9 417.8L1402.1 415.2L1408.3 411.6L1409.5 409.0L1406.4 400.8L1404.6 399.9L1399.6 407.2L1399.0 412.1L1392.8 412.5L1386.6 410.3L1381.6 407.2L1379.1 403.6L1377.9 399.0L1378.5 392.6L1373.5 394.0L1369.2 390.3L1375.4 390.3L1381.6 387.0L1382.2 382.8L1377.2 379.5L1367.9 379.9L1358.6 385.1L1349.3 392.6L1343.1 399.9L1338.7 401.8L1344.3 395.4L1348.0 389.3L1354.9 381.4L1362.9 378.0L1368.5 369.9L1380.3 368.9L1395.9 369.9L1408.3 369.4L1417.6 360.0L1426.3 357.6L1434.0 356.0L1437.7 357.5L1441.9 351.0L1440.5 338.4L1437.7 331.4L1430.0 327.0L1428.2 334.0L1424.5 329.3L1417.6 329.3L1422.0 325.0L1414.5 318.5L1406.4 311.9L1400.2 303.0L1397.7 292.7L1392.8 281.0L1386.6 271.4L1380.3 259.0L1375.4 265.2L1372.3 275.0L1367.9 278.6L1359.8 283.4L1356.1 284.5L1349.3 277.4L1348.0 267.7L1348.6 256.5L1346.2 250.1L1336.8 246.3L1333.7 241.1L1323.2 237.1L1317.0 234.5L1308.9 231.8L1299.6 229.8L1295.8 231.8L1295.2 239.8L1297.7 252.7L1300.8 262.8L1296.5 275.0L1293.4 278.6L1299.6 284.5L1303.9 292.7L1305.2 301.9L1298.0 317.4L1285.6 325.0L1290.2 331.4L1290.9 341.8L1291.5 350.0L1290.9 357.1L1285.3 360.5L1280.9 359.1L1277.8 352.0L1271.6 342.9L1269.7 331.4L1270.4 319.6L1262.3 317.4L1253.0 317.4L1240.5 309.7L1234.3 304.1L1228.1 299.6L1216.9 296.2L1207.0 298.5L1204.5 289.2L1195.8 278.0L1192.1 268.9L1192.1 256.5L1197.0 247.6L1200.1 239.8L1206.4 233.1L1209.5 226.4L1217.5 218.2L1225.0 209.7L1234.3 206.9L1240.5 195.3L1246.7 183.4L1243.6 148.5L873.9 148.5Z"/>
<path d="M950.6 327.6L960.9 326.6L962.8 333.2L968.4 349.9L966.5 353.7L960.9 349.9L954.4 338.8L950.6 331.3Z"/>
<path d="M1413.9 395.7L1419.5 385.9L1426.5 370.6L1430.7 358.0L1434.9 356.6L1437.7 359.4L1436.3 367.8L1441.9 372.0L1448.9 373.4L1453.8 379.0L1457.3 388.7L1458.7 397.1L1454.5 404.1L1450.3 403.4L1446.1 398.5L1441.9 399.9L1436.3 402.7L1432.8 403.4L1431.4 398.5L1420.9 397.1Z"/>
<path d="M1381.0 403.1L1384.7 405.4L1390.3 409.0L1395.9 404.9L1389.7 404.9L1383.4 400.4Z"/>
<path d="M1380.3 372.8L1389.7 374.2L1397.7 380.4L1394.0 380.4L1385.9 377.6L1381.0 373.7Z"/>
<path d="M1240.5 215.4L1249.9 220.9L1259.2 223.7L1265.4 211.2L1277.8 215.4L1282.8 209.7L1274.7 201.1L1265.4 195.3L1256.1 187.9L1246.7 184.9L1246.7 202.6L1239.3 209.7Z"/>
<path d="M1265.4 229.1L1271.6 225.0L1277.8 227.7L1271.6 233.1L1265.4 234.5Z"/>
<path d="M1282.2 233.1L1287.1 231.8L1287.1 241.1L1282.2 241.1Z"/>
<path d="M1271.6 340.8L1277.8 340.3L1284.0 343.9L1277.8 344.4Z"/>
<path d="M1284.0 304.1L1290.2 301.9L1290.2 310.8L1284.7 310.8Z"/>
<path d="M1293.4 148.5L1299.6 190.9L1296.5 201.1L1305.8 205.5L1318.2 202.6L1327.5 204.0L1335.0 212.6L1340.0 223.7L1349.3 229.1L1367.9 238.4L1377.2 238.4L1377.2 229.1L1367.9 223.7L1355.5 214.0L1364.8 218.2L1377.2 225.0L1380.3 219.5L1374.1 209.7L1377.2 201.1L1367.9 195.3L1361.7 186.4L1358.6 175.7L1371.0 180.3L1380.3 190.9L1386.6 196.8L1389.7 186.4L1395.9 180.3L1399.0 167.9L1395.9 148.5Z"/>
<path d="M1318.5 615.6L1320.1 613.6L1328.8 614.9L1331.6 614.3L1328.8 610.7L1325.0 607.0L1328.8 605.4L1335.6 606.1L1346.2 607.0L1346.8 609.3L1352.4 610.0L1359.8 615.3L1356.7 617.9L1346.8 614.9L1343.1 616.6L1339.3 620.2L1335.6 619.2L1333.7 616.6L1327.5 616.6L1322.6 617.5Z"/>
</g>
<g fill="#ebeae2">
<path d="M1257.4 592.3L1266.8 586.9L1284.2 586.1L1300.3 595.0L1317.8 603.8L1304.4 605.7L1293.6 597.7L1274.9 595.0L1262.8 595.0Z"/>
<path d="M1297.7 619.6L1305.7 617.8L1309.2 621.3L1303.0 623.7L1297.7 623.7Z"/>
<path d="M1295.0 565.5L1297.7 564.1L1300.3 573.5L1297.7 574.9Z"/>
<path d="M1400.1 666.6L1406.8 663.4L1407.6 668.2L1401.4 670.9Z"/>
</g>
<g fill="#d6e0ea" stroke="#ccd7e2" stroke-width="0.5">
<path d="M1208.8 402.2L1215.7 400.8L1219.4 404.0L1228.1 400.8L1231.8 396.7L1234.9 395.8L1233.1 400.4L1238.1 404.5L1246.7 403.1L1253.0 402.2L1255.4 404.9L1256.1 400.8L1253.6 395.4L1247.4 391.2L1243.6 384.2L1233.1 385.1L1232.5 381.8L1226.2 389.8L1224.4 390.7L1218.8 393.5L1212.6 399.9Z"/>
<path d="M1235.6 439.3L1236.8 444.4L1239.3 446.4L1241.8 445.5L1244.9 441.0L1245.2 435.1L1243.6 429.1L1245.2 420.5L1249.2 417.8L1253.0 411.6L1254.5 410.9L1249.2 408.5L1242.4 411.6L1239.9 412.5L1236.8 417.0L1234.9 421.3L1238.7 416.1L1240.2 415.6L1237.4 422.2L1236.2 429.1L1234.9 435.1Z"/>
<path d="M1254.5 410.9L1258.6 413.4L1262.9 417.0L1263.5 423.9L1259.8 427.0L1259.8 430.0L1262.9 427.0L1267.3 426.5L1269.0 435.1L1273.5 431.7L1273.5 423.9L1276.0 421.3L1276.0 415.6L1278.4 420.5L1284.0 422.2L1285.3 418.7L1282.2 414.3L1278.4 409.4L1271.6 407.6L1262.3 406.7L1258.6 407.2L1259.8 409.0L1254.8 409.9Z"/>
<path d="M1262.6 445.8L1265.4 446.9L1267.3 447.7L1271.6 447.7L1276.0 445.6L1280.8 443.7L1285.5 441.3L1290.2 437.7L1290.9 436.0L1287.1 436.4L1282.2 438.5L1276.0 438.1L1270.4 442.7L1264.8 443.5Z"/>
<path d="M1289.9 432.8L1296.5 432.0L1302.7 432.7L1307.6 430.4L1307.6 425.7L1305.8 424.8L1299.6 427.0L1293.4 427.4L1287.8 429.6L1285.3 432.6Z"/>
<path d="M1336.2 663.5L1339.3 667.3L1339.3 672.9L1335.0 674.8L1333.1 670.4L1334.4 665.4Z"/>
<path d="M1067.2 525.6L1072.3 527.6L1078.7 533.3L1082.6 543.6L1085.0 548.0L1081.3 550.0L1074.9 541.0L1068.5 526.9Z" fill="#dde5ec" stroke="none"/>
</g>
<g fill="none" stroke="#9a928f" stroke-opacity="0.85" stroke-width="0.8" stroke-linejoin="round">
<path d="M1053.4 517.7L1068.3 516.3L1067.7 517.9L1091.0 526.4L1108.8 526.4L1108.8 523.2L1119.2 523.2"/>
<path d="M1208.2 640.2L1208.2 635.7L1211.0 630.5L1219.1 630.2L1213.2 622.8L1215.7 622.8L1215.7 619.2L1227.2 619.2"/>
<path d="M1227.2 619.2L1226.9 631.5L1228.7 631.5"/>
<path d="M1227.2 619.2L1229.0 618.5L1232.5 614.6L1233.7 615.3"/>
<path d="M1233.1 632.8L1226.9 638.0L1225.9 641.0"/>
<path d="M1225.9 641.0L1223.8 643.1L1221.3 645.3"/>
<path d="M1225.9 641.0L1231.2 644.1L1235.9 645.0L1235.6 647.6"/>
<path d="M1238.7 650.1L1242.4 648.2L1242.4 645.3L1248.0 644.7L1253.0 639.2L1257.9 638.9L1264.5 637.3"/>
<path d="M1248.6 662.2L1253.6 663.1L1259.2 664.4L1261.4 663.5"/>
<path d="M1266.0 681.4L1266.3 676.4L1265.7 672.6L1267.9 672.0"/>
<path d="M1297.1 686.7L1300.5 682.4L1301.4 679.8L1300.5 677.6"/>
<path d="M1338.1 657.4L1331.9 661.9L1327.5 670.4L1330.6 679.8L1333.7 688.0L1345.5 688.3L1349.6 693.6L1361.7 693.0L1359.8 703.6L1362.9 710.5L1359.5 714.2L1363.6 717.3L1365.7 724.1"/>
<path d="M1291.5 722.9L1297.1 726.6L1300.2 729.1L1307.0 729.1L1311.4 731.0L1313.2 732.2"/>
<path d="M1282.2 752.7L1282.8 758.3L1287.1 762.1L1290.2 762.7L1294.0 752.7L1297.7 750.2L1304.5 747.8L1311.4 741.2L1313.2 737.5L1313.2 732.2"/>
<path d="M1313.2 732.2L1318.8 734.7L1323.8 739.4L1328.1 746.5L1335.6 745.0L1344.3 747.1L1346.5 757.7"/>
<path d="M1365.7 724.1L1364.2 721.0L1359.2 720.7L1357.3 719.5L1347.1 721.0L1347.1 725.1L1351.1 725.4L1349.6 727.3L1345.9 728.2L1349.9 738.4L1346.5 757.7"/>
<path d="M1346.5 757.7L1341.2 757.7L1328.1 763.3L1326.3 769.6L1322.6 777.1L1327.5 787.8"/>
<path d="M1365.7 724.1L1374.1 727.3L1382.2 722.3L1387.2 717.9L1383.4 716.1L1382.2 706.1L1390.3 709.2L1391.5 706.4L1402.1 703.6L1403.9 699.2"/>
<path d="M1403.9 699.2L1399.6 694.6L1401.2 689.9L1406.4 687.4L1403.9 684.6L1409.5 679.8"/>
<path d="M1403.9 699.2L1408.4 700.2L1407.4 703.6L1411.1 707.0L1409.2 709.2L1408.4 714.8L1410.2 720.1L1415.8 724.1L1420.7 722.3L1425.1 719.5L1430.0 719.5"/>
<path d="M1426.3 694.6L1425.1 698.6L1421.3 703.0L1420.4 706.7L1423.2 710.8L1425.1 710.8L1430.0 719.5"/>
<path d="M1430.0 719.5L1433.8 720.1L1433.8 716.1L1441.8 717.3"/>
<path d="M1445.6 695.5L1442.8 700.5L1445.6 709.2L1441.8 717.3"/>
<path d="M1441.8 717.3L1446.8 717.0L1452.1 717.9L1454.6 715.8L1460.2 706.4L1461.1 704.2"/>
<path d="M1189.9 381.4L1189.9 377.8L1192.1 378.5L1193.0 383.7L1198.3 385.6L1203.3 385.1L1207.6 388.4L1213.2 390.1L1217.2 389.8L1224.4 390.7L1231.8 387.9L1253.6 400.8L1256.1 404.9L1258.6 407.2L1261.7 408.1L1262.9 410.8L1268.5 414.7L1271.0 430.0L1269.0 435.1L1266.0 440.6L1264.8 443.5L1267.3 446.2L1276.0 441.9L1290.2 436.8L1289.9 432.8L1289.0 431.3L1292.1 429.7L1303.9 429.7L1306.4 425.7L1310.1 423.1L1313.2 419.1L1317.0 417.8L1336.8 417.8" stroke="#a6adbd"/>
<path d="M1335.3 606.7L1335.9 610.7L1333.7 613.9L1335.3 617.5"/>
<path d="M1386.4 206.5L1388.2 220.1L1382.7 237.4L1384.7 252.3L1395.1 272.0L1402.5 291.8L1407.4 306.6L1419.8 319.0L1430.9 322.7L1432.2 331.4L1439.6 348.7L1444.5 366.0L1450.7 378.3L1456.9 388.2L1460.6 400.1" stroke="#b3bccb"/>
<path d="M1256.5 768V755.8H1283" stroke="#a9b1c4"/>
</g>
<path d="M905.0 258.6L915.2 257.7L916.2 263.3L925.5 273.5L932.9 267.9L937.6 265.2L942.3 270.7L950.6 279.1L959.0 295.9L960.9 302.4L971.1 309.9L973.0 316.4L968.4 323.8L962.8 322.9L956.2 324.8L949.7 322.9L946.9 316.4L942.3 311.7L932.9 297.8L929.2 288.4L921.8 278.2L912.5 268.9L905.0 266.1Z" fill="#fff" stroke="#fff" stroke-width="1.5" stroke-linejoin="round"/>
<g fill="#b3e18f" stroke="#b3e18f" stroke-width="0.8" stroke-linejoin="round">
<path d="M905.0 260.5L912.5 259.6L913.4 263.3L923.6 273.5L930.2 280.1L927.4 281.0L919.9 274.5L910.6 265.2L905.0 264.2Z"/>
<path d="M932.9 267.9L937.6 266.1L940.4 270.7L937.6 276.3L935.7 281.0L931.1 274.5Z"/>
<path d="M941.3 273.5L945.1 276.3L950.6 282.9L957.2 295.9L954.4 299.6L948.8 290.3L944.1 283.8Z"/>
<path d="M932.9 285.6L939.5 287.5L941.3 292.2L936.7 291.2L932.9 289.4Z"/>
<path d="M938.5 294.0L942.3 297.8L943.2 302.4L939.5 299.6Z"/>
<path d="M948.8 298.7L954.4 301.5L956.2 304.3L951.6 304.3Z"/>
<path d="M958.1 303.4L968.4 308.0L971.1 313.6L969.3 321.1L965.6 317.3L962.8 315.5L959.0 311.7L957.2 307.1Z"/>
<path d="M950.6 308.0L954.4 310.8L959.0 318.3L957.2 322.0L953.4 320.1L952.5 313.6Z"/>
<path d="M943.2 285.6L946.0 286.6L946.9 295.9L945.1 297.8Z"/>
</g>
<path d="M1362.6 617.0L1366.0 615.2L1377.0 615.0L1383.5 616.5L1382.5 620.0L1373.0 622.0L1365.0 621.8Z" fill="#fff"/>
<g stroke="#fff" stroke-width="2.2" stroke-linejoin="round">
<path d="M1006.1 387.2L1010.6 388.9L1015.0 389.6L1018.1 389.8L1018.7 391.7L1017.5 395.4L1018.1 399.0L1020.6 397.2L1020.6 392.6L1019.3 387.9L1020.0 384.2L1018.3 381.4L1053.9 381.4L1053.9 405.1L1054.6 409.0L1041.8 409.0L1039.8 409.6L1032.4 411.6L1028.0 412.5L1023.7 411.8L1021.2 413.0L1018.3 412.1L1018.1 410.1L1015.6 407.6L1013.7 406.7L1010.5 406.7L1010.5 406.7L1010.2 403.1L1010.0 400.8L1009.4 398.1L1008.2 393.5L1006.3 389.8L1006.1 387.2Z" fill="#b3e18f"/>
<path d="M1010.5 406.7L1013.7 406.7L1015.6 407.6L1018.1 410.1L1018.3 412.1L1021.2 413.0L1023.7 411.8L1028.0 412.5L1032.4 411.6L1039.8 409.6L1041.8 409.0L1054.6 409.0L1057.2 414.3L1055.1 419.1L1052.9 423.1L1054.1 424.8L1053.9 428.0L1053.9 443.5L1009.4 443.5L1008.2 439.3L1007.2 436.5L1008.8 431.7L1010.0 426.5L1010.3 420.5L1011.0 413.4L1011.0 409.0L1010.5 406.7Z" fill="#f0cc6f"/>
<path d="M1009.4 443.5L1035.5 443.5L1035.5 468.1L1068.9 499.2L1068.9 499.2L1069.2 500.7L1072.0 504.5L1070.1 506.7L1069.5 510.5L1068.3 511.2L1069.7 514.2L1068.3 516.3L1053.4 517.7L1052.6 515.3L1052.3 512.7L1049.2 510.1L1046.1 508.8L1045.4 507.5L1044.5 506.5L1040.5 505.6L1038.0 503.7L1032.7 503.3L1031.6 502.2L1031.5 498.1L1027.4 493.9L1023.7 489.2L1023.4 486.9L1024.3 485.4L1022.4 484.2L1020.6 482.3L1020.0 478.0L1017.2 476.0L1016.9 473.6L1012.5 468.9L1011.9 464.0L1008.8 458.0L1008.2 456.3L1010.0 452.2L1009.7 447.7L1009.4 443.5Z" fill="#b3e18f"/>
<path d="M1035.5 443.5L1072.5 443.5L1072.5 490.0L1072.5 490.0L1068.2 491.6L1068.9 499.2L1035.5 468.1Z" fill="#f0cc6f"/>
<path d="M1053.9 381.4L1060.0 381.4L1060.0 390.7L1062.5 396.3L1066.6 399.9L1069.0 403.3L1070.9 409.0L1069.7 413.0L1073.1 411.7L1076.2 418.3L1079.0 422.6L1083.3 421.8L1088.3 421.8L1091.1 422.5L1091.1 443.5L1053.9 443.5L1053.9 443.5L1053.9 428.0L1054.1 424.8L1052.9 423.1L1055.1 419.1L1057.2 414.3L1054.6 409.0L1053.9 405.1Z" fill="#b3e18f"/>
<path d="M1060.0 381.4L1134.6 381.4L1134.6 417.8L1091.1 417.8L1091.1 422.5L1088.3 421.8L1083.3 421.8L1079.0 422.6L1076.2 418.3L1073.1 411.7L1069.7 413.0L1070.9 409.0L1069.0 403.3L1066.6 399.9L1062.5 396.3L1060.0 390.7L1060.0 381.4Z" fill="#f5f4ef"/>
<path d="M1091.1 417.8L1134.6 417.8L1134.6 451.8L1091.1 451.8Z" fill="#f5f4ef"/>
<path d="M1103.5 451.8L1147.0 451.8L1147.0 483.8L1103.5 483.8Z" fill="#b3e18f"/>
<path d="M1072.5 443.5L1091.1 443.5L1091.1 451.8L1103.5 451.8L1103.5 483.8L1072.5 483.8Z" fill="#f0cc6f"/>
<path d="M1072.5 483.8L1103.5 483.8L1103.5 526.4L1091.0 526.4L1067.7 517.9L1068.3 516.3L1069.7 514.2L1068.3 511.2L1069.5 510.5L1070.1 506.7L1072.0 504.5L1069.2 500.7L1068.9 499.2L1068.9 499.2L1068.2 491.6L1072.5 490.0Z" fill="#f0cc6f"/>
<path d="M1103.5 483.8L1141.1 483.8L1141.1 487.7L1140.7 521.5L1118.6 521.5L1119.2 523.2L1108.8 523.2L1108.8 526.4L1103.5 526.4Z" fill="#dd7a73"/>
<path d="M1134.6 381.4L1177.0 381.4L1177.8 390.7L1179.3 395.4L1179.6 400.8L1181.2 409.0L1181.1 409.5L1134.6 409.5Z" fill="#f5f4ef"/>
<path d="M1134.6 409.5L1181.1 409.5L1179.3 412.5L1181.8 415.2L1181.8 432.1L1180.9 432.1L1181.8 436.0L1181.5 440.0L1181.5 440.0L1180.3 439.3L1176.5 437.7L1172.8 438.1L1169.1 436.6L1134.6 436.8Z" fill="#f5f4ef"/>
<path d="M1134.6 436.8L1169.1 436.6L1172.8 438.1L1176.5 437.7L1180.3 439.3L1181.5 440.0L1181.5 440.0L1182.8 443.5L1184.0 447.7L1185.2 450.2L1185.5 454.3L1186.0 455.3L1186.0 455.3L1189.0 460.0L1147.0 460.0L1147.0 451.8L1134.6 451.8Z" fill="#f0cc6f"/>
<path d="M1147.0 460.0L1189.0 460.0L1191.5 461.6L1193.3 467.3L1193.2 483.8L1147.0 483.8Z" fill="#dd7a73"/>
<path d="M1141.1 483.8L1193.2 483.8L1193.2 487.7L1194.4 496.1L1194.1 509.4L1194.1 509.4L1190.8 507.5L1187.7 507.6L1182.1 508.6L1179.0 507.5L1177.2 508.2L1174.1 506.9L1171.6 505.8L1164.7 504.5L1161.6 503.7L1159.8 502.5L1159.8 487.7L1141.1 487.7Z" fill="#f0cc6f"/>
<path d="M1141.1 487.7L1159.8 487.7L1159.8 502.5L1161.6 503.7L1164.7 504.5L1171.6 505.8L1174.1 506.9L1177.2 508.2L1179.0 507.5L1182.1 508.6L1187.7 507.6L1190.8 507.5L1194.1 509.4L1196.8 510.1L1196.8 521.6L1198.3 524.5L1199.8 527.4L1198.9 531.7L1198.9 535.3L1198.0 538.2L1198.0 538.2L1192.7 540.3L1190.2 542.5L1185.2 546.0L1180.9 548.1L1177.2 553.1L1175.9 558.7L1177.5 564.5L1177.5 564.5L1174.7 564.9L1170.9 563.9L1165.4 561.4L1162.9 553.8L1157.9 548.1L1155.4 542.5L1151.1 537.7L1145.5 536.9L1143.0 538.2L1140.2 543.4L1134.9 541.1L1131.8 538.6L1129.3 531.7L1122.5 525.9L1119.2 523.2L1118.6 521.5L1140.7 521.5Z" fill="#b3e18f"/>
<path d="M1177.0 381.4L1189.9 381.4L1189.9 377.8L1192.1 378.5L1193.0 383.7L1198.3 385.6L1203.3 385.1L1207.6 388.4L1213.2 390.1L1217.2 389.8L1224.4 390.7L1224.4 390.7L1218.8 393.5L1212.6 399.9L1208.8 402.2L1208.8 402.2L1207.6 403.0L1207.6 408.3L1204.5 410.8L1204.8 415.2L1204.5 420.0L1207.6 422.2L1210.1 423.9L1213.8 427.4L1214.3 432.1L1181.8 432.1L1181.8 432.1L1181.8 415.2L1179.3 412.5L1181.1 409.5L1181.1 409.5L1181.2 409.0L1179.6 400.8L1179.3 395.4L1177.8 390.7L1177.0 381.4Z" fill="#b3e18f"/>
<path d="M1181.8 432.1L1214.3 432.1L1215.1 435.1L1217.9 439.3L1220.7 442.7L1221.0 445.2L1219.7 447.3L1215.4 448.5L1215.1 453.5L1213.1 456.9L1211.2 455.1L1186.0 455.3L1186.0 455.3L1185.5 454.3L1185.2 450.2L1184.0 447.7L1182.8 443.5L1181.5 440.0L1181.8 436.0L1180.9 432.1Z" fill="#dd7a73"/>
<path d="M1186.0 455.3L1211.2 455.1L1213.1 456.9L1212.6 460.0L1213.2 462.4L1217.5 466.5L1219.1 468.5L1220.8 469.7L1220.7 472.0L1219.7 474.4L1222.5 476.8L1225.0 481.5L1227.2 483.8L1227.2 483.8L1225.6 487.7L1225.6 487.7L1223.8 491.6L1219.6 491.6L1221.0 487.7L1193.2 487.7L1193.2 483.8L1193.3 467.3L1191.5 461.6L1189.0 460.0L1189.0 460.0L1186.0 455.3Z" fill="#f0cc6f"/>
<path d="M1193.2 487.7L1221.0 487.7L1219.6 491.6L1223.8 491.6L1221.6 498.1L1220.0 499.2L1220.0 499.2L1220.0 500.3L1218.2 503.7L1215.7 507.5L1214.8 514.2L1196.8 514.2L1196.8 510.1L1194.1 509.4L1194.4 496.1Z" fill="#b3e18f"/>
<path d="M1196.8 514.2L1214.8 514.2L1215.1 517.9L1216.3 519.3L1213.2 524.5L1212.0 528.8L1223.6 528.8L1222.8 531.4L1224.4 534.6L1224.4 534.6L1225.6 535.7L1226.9 538.2L1225.6 539.6L1228.1 541.8L1225.6 543.5L1220.7 542.5L1216.3 542.8L1213.8 541.1L1210.7 539.6L1207.6 539.3L1202.0 537.7L1198.0 538.2L1198.0 538.2L1198.9 535.3L1198.9 531.7L1199.8 527.4L1198.3 524.5L1196.8 521.6L1196.8 514.2Z" fill="#dd7a73"/>
<path d="M1220.0 499.2L1220.0 500.3L1218.2 503.7L1215.7 507.5L1214.8 514.2L1215.1 517.9L1216.3 519.3L1213.2 524.5L1212.0 528.8L1223.6 528.8L1222.8 531.4L1224.4 534.6L1224.4 534.6L1228.1 533.2L1231.8 533.5L1231.8 533.5L1231.4 522.3L1233.7 499.9L1233.1 499.2Z" fill="#f0cc6f"/>
<path d="M1233.1 499.2L1233.7 499.9L1231.4 522.3L1231.8 533.5L1231.8 533.5L1234.3 534.4L1237.4 533.9L1237.4 533.9L1238.1 531.4L1236.8 528.8L1253.0 528.8L1252.7 525.2L1253.0 519.3L1251.8 515.1L1249.2 499.2Z" fill="#dd7a73"/>
<path d="M1249.2 499.2L1251.8 515.1L1253.0 519.3L1252.7 525.2L1253.0 528.8L1253.8 531.0L1270.4 531.9L1271.3 533.5L1275.0 530.9L1275.0 530.9L1276.6 525.2L1278.7 521.3L1278.7 521.3L1277.2 520.8L1274.7 514.2L1272.2 512.0L1270.4 509.7L1266.0 503.1L1263.2 501.5L1264.8 499.2Z" fill="#f0cc6f"/>
<path d="M1237.4 533.9L1238.1 531.4L1236.8 528.8L1253.0 528.8L1253.8 531.0L1270.4 531.9L1271.3 533.5L1275.0 530.9L1275.0 530.9L1276.0 537.5L1278.4 543.2L1280.6 547.1L1281.9 553.1L1283.7 558.7L1283.4 565.6L1281.5 569.7L1277.2 570.3L1273.5 564.9L1271.3 560.7L1267.3 553.8L1266.3 551.0L1267.6 545.3L1266.6 542.1L1262.9 538.6L1259.2 535.3L1257.0 536.4L1251.1 538.3L1248.9 535.3L1244.9 533.2L1237.4 533.9Z" fill="#b3e18f"/>
<path d="M1264.8 499.2L1269.1 497.7L1277.5 498.1L1278.3 498.4L1279.2 500.6L1286.1 500.7L1293.0 507.8L1293.0 507.8L1289.0 512.7L1284.7 516.4L1281.2 519.0L1278.7 521.3L1278.7 521.3L1277.2 520.8L1274.7 514.2L1272.2 512.0L1270.4 509.7L1266.0 503.1L1263.2 501.5L1264.8 499.2Z" fill="#b3e18f"/>
<path d="M1257.2 499.2L1257.3 497.7L1264.8 495.0L1267.9 491.6L1273.6 487.0L1309.7 487.3L1309.7 487.3L1310.4 490.0L1312.0 497.3L1308.9 498.8L1305.8 501.5L1302.0 501.8L1298.9 505.2L1296.8 507.9L1293.0 507.8L1293.0 507.8L1286.1 500.7L1279.2 500.6L1278.3 498.4L1277.5 498.1L1269.1 497.7L1264.8 499.2Z" fill="#b3e18f"/>
<path d="M1220.0 499.2L1257.2 499.2L1257.3 497.7L1264.8 495.0L1267.9 491.6L1273.6 487.0L1261.2 486.9L1233.9 487.7L1225.6 487.7L1223.8 491.6L1221.6 498.1L1220.0 499.2Z" fill="#f0cc6f"/>
<path d="M1225.6 487.7L1233.9 487.7L1233.9 486.3L1261.2 486.9L1264.8 485.4L1269.7 481.5L1271.8 479.6L1269.1 477.2L1267.9 474.7L1267.9 472.7L1266.3 470.1L1263.5 471.2L1261.0 470.8L1257.3 469.7L1256.1 467.3L1254.1 467.3L1253.6 469.8L1250.5 470.5L1248.3 473.9L1244.9 474.8L1243.6 476.5L1239.9 477.7L1236.8 476.4L1234.0 477.6L1231.5 480.7L1231.2 483.3L1227.2 483.8Z" fill="#b3e18f"/>
<path d="M1217.9 439.3L1235.6 439.3L1236.8 444.4L1237.2 446.0L1237.2 465.3L1236.5 472.0L1234.3 476.0L1234.0 477.6L1231.5 480.7L1231.2 483.3L1227.2 483.8L1227.2 483.8L1225.0 481.5L1222.5 476.8L1219.7 474.4L1220.7 472.0L1220.8 469.7L1219.1 468.5L1217.5 466.5L1213.2 462.4L1212.6 460.0L1213.1 456.9L1213.1 456.9L1215.1 453.5L1215.4 448.5L1219.7 447.3L1221.0 445.2L1220.7 442.7L1217.9 439.3Z" fill="#b3e18f"/>
<path d="M1237.2 446.0L1239.3 446.4L1241.8 445.5L1254.2 445.5L1254.1 467.3L1253.6 469.8L1250.5 470.5L1248.3 473.9L1244.9 474.8L1243.6 476.5L1239.9 477.7L1236.8 476.4L1234.0 477.6L1234.0 477.6L1234.3 476.0L1236.5 472.0L1237.2 465.3Z" fill="#b3e18f"/>
<path d="M1254.2 446.0L1262.6 445.8L1265.4 446.9L1267.3 447.7L1271.6 447.7L1276.0 445.6L1280.8 443.7L1280.8 454.8L1280.8 454.8L1280.0 455.9L1280.3 458.4L1278.7 462.4L1275.0 464.8L1273.2 467.3L1272.8 468.9L1270.4 471.2L1267.9 472.7L1266.3 470.1L1263.5 471.2L1261.0 470.8L1257.3 469.7L1256.1 467.3L1254.1 467.3Z" fill="#b3e18f"/>
<path d="M1254.2 445.8L1241.8 445.5L1241.8 445.5L1244.9 441.0L1245.2 435.1L1243.6 429.1L1245.2 420.5L1249.2 417.8L1253.0 411.6L1254.5 410.9L1258.6 413.4L1262.9 417.0L1263.5 423.9L1259.8 427.0L1259.8 430.0L1262.9 427.0L1267.3 426.5L1269.0 435.1L1266.0 440.6L1264.5 443.1L1262.6 445.8Z" fill="#f0cc6f"/>
<path d="M1219.4 404.0L1228.1 400.8L1231.8 396.7L1234.9 395.8L1233.1 400.4L1238.1 404.5L1246.7 403.1L1253.0 402.2L1255.4 404.9L1258.6 407.2L1259.8 409.0L1254.8 409.9L1249.2 408.5L1242.4 411.6L1239.9 412.5L1236.8 417.0L1236.8 417.0L1235.6 414.7L1233.7 410.8L1229.4 409.0L1221.3 405.8L1219.4 404.0Z" fill="#f0cc6f"/>
<path d="M1208.8 402.2L1215.7 400.8L1216.9 402.2L1219.4 404.0L1221.3 405.8L1229.4 409.0L1233.7 410.8L1235.6 414.7L1236.8 417.0L1234.9 421.3L1238.7 416.1L1240.2 415.6L1237.4 422.2L1236.2 429.1L1234.9 435.1L1235.6 439.3L1217.9 439.3L1217.9 439.3L1215.1 435.1L1214.3 432.1L1214.3 432.1L1213.8 427.4L1210.1 423.9L1207.6 422.2L1204.5 420.0L1204.8 415.2L1204.5 410.8L1207.6 408.3L1207.6 403.0L1208.8 402.2Z" fill="#f0cc6f"/>
<path d="M1280.8 443.7L1280.8 440.9L1285.5 441.3L1285.5 443.5L1312.9 443.5L1314.8 446.9L1317.0 448.9L1314.5 451.8L1313.9 454.3L1316.7 458.4L1314.5 460.8L1312.6 461.6L1310.2 462.3L1280.8 462.3Z" fill="#b3e18f"/>
<path d="M1285.5 441.3L1290.2 437.7L1290.9 436.0L1289.9 432.8L1296.5 432.0L1302.7 432.7L1307.6 430.4L1307.6 425.7L1310.1 423.1L1313.2 419.1L1317.0 417.8L1325.3 417.8L1325.0 422.2L1325.0 430.0L1325.8 437.2L1324.4 443.1L1324.4 449.4L1323.5 451.8L1321.9 451.8L1317.0 448.9L1317.0 448.9L1314.8 446.9L1312.9 443.5L1285.5 443.5Z" fill="#b3e18f"/>
<path d="M1321.3 455.1L1325.7 454.7L1331.3 452.9L1334.4 451.4L1331.9 451.0L1330.0 452.0L1325.7 452.4L1322.9 453.1Z" fill="#b3e18f"/>
<path d="M1317.0 448.9L1321.9 451.8L1321.3 454.3L1319.8 455.9L1321.3 456.3L1320.7 462.0L1318.8 464.8L1315.7 468.6L1313.9 465.7L1311.7 463.2L1312.6 461.6L1312.6 461.6L1314.5 460.8L1316.7 458.4L1313.9 454.3L1314.5 451.8L1317.0 448.9Z" fill="#dd7a73"/>
<path d="M1310.2 462.3L1312.6 461.6L1311.7 463.2L1312.6 465.7L1314.5 469.7L1314.8 472.4L1310.7 472.4Z" fill="#f0cc6f"/>
<path d="M1287.3 462.3L1310.2 462.3L1310.7 472.4L1314.8 472.4L1313.5 475.8L1309.5 476.4L1307.3 476.8L1307.3 476.8L1303.0 474.0L1300.8 472.8L1302.4 470.5L1302.0 468.6L1299.6 466.9L1298.2 465.5L1298.2 465.5L1297.4 463.2L1294.0 463.1L1290.6 464.4L1287.3 466.5Z" fill="#f0cc6f"/>
<path d="M1261.2 486.9L1309.7 487.3L1309.7 487.3L1308.9 484.6L1307.0 483.8L1307.0 479.9L1307.3 476.8L1307.3 476.8L1303.0 474.0L1300.8 472.8L1302.4 470.5L1302.0 468.6L1299.6 466.9L1298.2 465.5L1297.4 467.1L1294.3 465.3L1291.1 469.9L1288.8 472.2L1286.2 471.4L1284.0 476.4L1282.2 479.9L1278.7 480.5L1276.4 482.0L1273.6 482.3L1271.8 479.6L1271.8 479.6L1269.7 481.5L1264.8 485.4L1261.2 486.9Z" fill="#b3e18f"/>
<path d="M1309.5 476.4L1313.5 475.8L1311.4 479.5L1309.2 482.9L1308.9 481.5Z" fill="#b3e18f"/>
<path d="M1267.9 472.7L1270.4 471.2L1272.8 468.9L1273.2 467.3L1275.0 464.8L1278.7 462.4L1280.3 458.4L1280.0 455.9L1280.8 454.8L1280.8 462.3L1287.3 462.3L1287.3 466.5L1290.6 464.4L1294.0 463.1L1297.4 463.2L1298.2 465.5L1297.4 467.1L1294.3 465.3L1291.1 469.9L1288.8 472.2L1286.2 471.4L1284.0 476.4L1282.2 479.9L1278.7 480.5L1276.4 482.0L1273.6 482.3L1271.8 479.6L1269.1 477.2L1267.9 474.7L1267.9 472.7Z" fill="#f5f4ef"/>
<path d="M1324.5 443.1L1335.0 443.4L1334.6 449.2L1328.1 449.6L1323.5 451.8L1324.4 449.4Z" fill="#f0cc6f"/>
<path d="M1335.0 443.4L1337.6 443.4L1338.7 446.3L1339.2 447.7L1336.8 448.8L1334.6 449.2Z" fill="#b3e18f"/>
<path d="M1324.4 443.1L1325.8 437.2L1330.9 437.4L1338.1 437.7L1341.1 436.2L1342.4 438.1L1340.0 440.6L1342.1 443.5L1343.1 445.2L1346.2 445.2L1346.2 443.1L1344.9 442.9L1346.5 446.0L1342.4 447.3L1339.2 447.7L1338.7 446.3L1337.6 443.4Z" fill="#f0cc6f"/>
<path d="M1325.3 417.8L1336.8 417.8L1336.5 421.3L1333.4 425.7L1331.9 430.0L1330.9 435.1L1330.9 437.4L1325.8 437.2L1325.0 430.0L1325.0 422.2L1325.3 417.8Z" fill="#b3e18f"/>
<path d="M1336.8 417.8L1337.5 415.6L1339.5 415.2L1340.0 423.9L1340.1 430.0L1341.8 434.5L1341.1 436.2L1338.1 437.7L1330.9 437.4L1330.9 437.4L1330.9 435.1L1331.9 430.0L1333.4 425.7L1336.5 421.3L1336.8 417.8Z" fill="#b3e18f"/>
<path d="M1339.5 415.2L1343.7 410.8L1344.3 407.2L1346.2 402.7L1350.9 395.7L1353.0 398.3L1356.7 396.6L1359.8 399.3L1360.0 409.4L1362.0 412.5L1362.0 416.5L1365.1 419.4L1365.1 419.4L1361.1 422.2L1357.3 423.9L1353.6 423.9L1351.8 426.5L1347.4 428.7L1344.6 430.0L1342.4 434.3L1341.8 434.5L1341.8 434.5L1340.1 430.0L1340.0 423.9L1339.5 415.2Z" fill="#f0cc6f"/>
</g>
<circle cx="1032.4" cy="396" r="7" fill="rgba(106,160,30,0.78)"/>
<circle cx="1032.4" cy="426.9" r="2.1" fill="rgba(228,125,120,0.7)"/>
<circle cx="1070" cy="426.4" r="2.1" fill="rgba(228,125,120,0.7)"/>
<circle cx="1056.9" cy="465.4" r="2.1" fill="rgba(228,125,120,0.7)"/>
<circle cx="1088.6" cy="466.8" r="2.1" fill="rgba(228,125,120,0.7)"/>
<circle cx="1038.3" cy="488.7" r="30.3" fill="rgba(110,160,25,0.74)"/>
<circle cx="1088.6" cy="505" r="2.1" fill="rgba(228,125,120,0.7)"/>
<circle cx="1127.1" cy="468.4" r="2.1" fill="rgba(228,125,120,0.7)"/>
<circle cx="1122.9" cy="504.5" r="2.1" fill="rgba(228,125,120,0.7)"/>
<circle cx="1163.2" cy="448.6" r="2.1" fill="rgba(228,125,120,0.7)"/>
<circle cx="1172.3" cy="471.9" r="2.1" fill="rgba(228,125,120,0.7)"/>
<circle cx="1180" cy="496" r="2.1" fill="rgba(228,125,120,0.7)"/>
<circle cx="1168" cy="528.3" r="2.1" fill="rgba(228,125,120,0.7)"/>
<circle cx="1195.5" cy="407.7" r="7.4" fill="rgba(106,160,30,0.78)"/>
<circle cx="1223.7" cy="422.3" r="2.1" fill="rgba(228,125,120,0.7)"/>
<circle cx="1256.8" cy="434" r="2.1" fill="rgba(228,125,120,0.7)"/>
<circle cx="1202.1" cy="443" r="2.1" fill="rgba(228,125,120,0.7)"/>
<circle cx="1229.4" cy="459.2" r="2.1" fill="rgba(228,125,120,0.7)"/>
<circle cx="1245.5" cy="461.8" r="2.1" fill="rgba(228,125,120,0.7)"/>
<circle cx="1268.1" cy="458.5" r="5" fill="rgba(106,160,30,0.78)"/>
<circle cx="1208.5" cy="472.8" r="2.1" fill="rgba(228,125,120,0.7)"/>
<circle cx="1207.6" cy="500" r="9" fill="rgba(106,160,30,0.78)"/>
<circle cx="1207.1" cy="528.8" r="2.1" fill="rgba(228,125,120,0.7)"/>
<circle cx="1224.8" cy="518.2" r="2.1" fill="rgba(228,125,120,0.7)"/>
<circle cx="1243" cy="516.7" r="2.1" fill="rgba(228,125,120,0.7)"/>
<circle cx="1262.1" cy="515.9" r="2.1" fill="rgba(228,125,120,0.7)"/>
<circle cx="1245.8" cy="490.2" r="2.1" fill="rgba(228,125,120,0.7)"/>
<circle cx="1256" cy="479.7" r="2.1" fill="rgba(228,125,120,0.7)"/>
<circle cx="1279.8" cy="509.8" r="2.1" fill="rgba(228,125,120,0.7)"/>
<circle cx="1292.3" cy="496.8" r="2.1" fill="rgba(228,125,120,0.7)"/>
<circle cx="1275.8" cy="550" r="2.1" fill="rgba(228,125,120,0.7)"/>
<circle cx="1297" cy="480.9" r="2.1" fill="rgba(228,125,120,0.7)"/>
<circle cx="1303.9" cy="467.9" r="2.1" fill="rgba(228,125,120,0.7)"/>
<circle cx="1304.7" cy="470.9" r="2.1" fill="rgba(228,125,120,0.7)"/>
<circle cx="1314" cy="472.3" r="2.1" fill="rgba(228,125,120,0.7)"/>
<circle cx="1301.6" cy="457.5" r="2.1" fill="rgba(228,125,120,0.7)"/>
<circle cx="1319.6" cy="460.3" r="2.1" fill="rgba(228,125,120,0.7)"/>
<circle cx="1316.4" cy="437.5" r="2.1" fill="rgba(228,125,120,0.7)"/>
<circle cx="1330.8" cy="449" r="2.1" fill="rgba(228,125,120,0.7)"/>
<circle cx="1338.6" cy="449" r="2.1" fill="rgba(228,125,120,0.7)"/>
<circle cx="1338.3" cy="433.7" r="2.1" fill="rgba(228,125,120,0.7)"/>
<circle cx="1353.7" cy="417.7" r="2.1" fill="rgba(228,125,120,0.7)"/>
<path transform="translate(1032.4 396)" d="M0 0C-1.6-4.3-9.3-12.3-9.3-18.8A9.3 9.3 0 1 1 9.3-18.8C9.3-12.3 1.6-4.3 0 0Z" fill="#b2f120"/>
<path transform="translate(1195.5 407.7)" d="M0 0C-1.6-4.3-9.3-12.3-9.3-18.8A9.3 9.3 0 1 1 9.3-18.8C9.3-12.3 1.6-4.3 0 0Z" fill="#b2f120"/>
<path transform="translate(1353.7 417.7)" d="M0 0C-1.6-4.3-9.3-12.3-9.3-18.8A9.3 9.3 0 1 1 9.3-18.8C9.3-12.3 1.6-4.3 0 0Z" fill="#f0820f"/>
<path transform="translate(1223.7 422.3)" d="M0 0C-1.6-4.3-9.3-12.3-9.3-18.8A9.3 9.3 0 1 1 9.3-18.8C9.3-12.3 1.6-4.3 0 0Z" fill="#f0820f"/>
<path transform="translate(1070 426.4)" d="M0 0C-1.6-4.3-9.3-12.3-9.3-18.8A9.3 9.3 0 1 1 9.3-18.8C9.3-12.3 1.6-4.3 0 0Z" fill="#f0820f"/>
<path transform="translate(1032.4 426.9)" d="M0 0C-1.6-4.3-9.3-12.3-9.3-18.8A9.3 9.3 0 1 1 9.3-18.8C9.3-12.3 1.6-4.3 0 0Z" fill="#f0820f"/>
<path transform="translate(1338.3 433.7)" d="M0 0C-1.6-4.3-9.3-12.3-9.3-18.8A9.3 9.3 0 1 1 9.3-18.8C9.3-12.3 1.6-4.3 0 0Z" fill="#b2f120"/>
<path transform="translate(1256.8 434)" d="M0 0C-1.6-4.3-9.3-12.3-9.3-18.8A9.3 9.3 0 1 1 9.3-18.8C9.3-12.3 1.6-4.3 0 0Z" fill="#f0820f"/>
<path transform="translate(1316.4 437.5)" d="M0 0C-1.6-4.3-9.3-12.3-9.3-18.8A9.3 9.3 0 1 1 9.3-18.8C9.3-12.3 1.6-4.3 0 0Z" fill="#b2f120"/>
<path transform="translate(1202.1 443)" d="M0 0C-1.6-4.3-9.3-12.3-9.3-18.8A9.3 9.3 0 1 1 9.3-18.8C9.3-12.3 1.6-4.3 0 0Z" fill="#f0820f"/>
<path transform="translate(1163.2 448.6)" d="M0 0C-1.6-4.3-9.3-12.3-9.3-18.8A9.3 9.3 0 1 1 9.3-18.8C9.3-12.3 1.6-4.3 0 0Z" fill="#f0820f"/>
<path transform="translate(1330.8 449)" d="M0 0C-1.6-4.3-9.3-12.3-9.3-18.8A9.3 9.3 0 1 1 9.3-18.8C9.3-12.3 1.6-4.3 0 0Z" fill="#f0820f"/>
<path transform="translate(1338.6 449)" d="M0 0C-1.6-4.3-9.3-12.3-9.3-18.8A9.3 9.3 0 1 1 9.3-18.8C9.3-12.3 1.6-4.3 0 0Z" fill="#f0820f"/>
<path transform="translate(1301.6 457.5)" d="M0 0C-1.6-4.3-9.3-12.3-9.3-18.8A9.3 9.3 0 1 1 9.3-18.8C9.3-12.3 1.6-4.3 0 0Z" fill="#b2f120"/>
<path transform="translate(1268.1 458.5)" d="M0 0C-1.6-4.3-9.3-12.3-9.3-18.8A9.3 9.3 0 1 1 9.3-18.8C9.3-12.3 1.6-4.3 0 0Z" fill="#b2f120"/>
<path transform="translate(1229.4 459.2)" d="M0 0C-1.6-4.3-9.3-12.3-9.3-18.8A9.3 9.3 0 1 1 9.3-18.8C9.3-12.3 1.6-4.3 0 0Z" fill="#b2f120"/>
<path transform="translate(1319.6 460.3)" d="M0 0C-1.6-4.3-9.3-12.3-9.3-18.8A9.3 9.3 0 1 1 9.3-18.8C9.3-12.3 1.6-4.3 0 0Z" fill="#b2f120"/>
<path transform="translate(1245.5 461.8)" d="M0 0C-1.6-4.3-9.3-12.3-9.3-18.8A9.3 9.3 0 1 1 9.3-18.8C9.3-12.3 1.6-4.3 0 0Z" fill="#b2f120"/>
<path transform="translate(1056.9 465.4)" d="M0 0C-1.6-4.3-9.3-12.3-9.3-18.8A9.3 9.3 0 1 1 9.3-18.8C9.3-12.3 1.6-4.3 0 0Z" fill="#f0820f"/>
<path transform="translate(1088.6 466.8)" d="M0 0C-1.6-4.3-9.3-12.3-9.3-18.8A9.3 9.3 0 1 1 9.3-18.8C9.3-12.3 1.6-4.3 0 0Z" fill="#f0820f"/>
<path transform="translate(1303.9 467.9)" d="M0 0C-1.6-4.3-9.3-12.3-9.3-18.8A9.3 9.3 0 1 1 9.3-18.8C9.3-12.3 1.6-4.3 0 0Z" fill="#f0820f"/>
<path transform="translate(1127.1 468.4)" d="M0 0C-1.6-4.3-9.3-12.3-9.3-18.8A9.3 9.3 0 1 1 9.3-18.8C9.3-12.3 1.6-4.3 0 0Z" fill="#f0820f"/>
<path transform="translate(1304.7 470.9)" d="M0 0C-1.6-4.3-9.3-12.3-9.3-18.8A9.3 9.3 0 1 1 9.3-18.8C9.3-12.3 1.6-4.3 0 0Z" fill="#f0820f"/>
<path transform="translate(1172.3 471.9)" d="M0 0C-1.6-4.3-9.3-12.3-9.3-18.8A9.3 9.3 0 1 1 9.3-18.8C9.3-12.3 1.6-4.3 0 0Z" fill="#f0820f"/>
<path transform="translate(1314 472.3)" d="M0 0C-1.6-4.3-9.3-12.3-9.3-18.8A9.3 9.3 0 1 1 9.3-18.8C9.3-12.3 1.6-4.3 0 0Z" fill="#f0820f"/>
<path transform="translate(1208.5 472.8)" d="M0 0C-1.6-4.3-9.3-12.3-9.3-18.8A9.3 9.3 0 1 1 9.3-18.8C9.3-12.3 1.6-4.3 0 0Z" fill="#f0820f"/>
<path transform="translate(1256 479.7)" d="M0 0C-1.6-4.3-9.3-12.3-9.3-18.8A9.3 9.3 0 1 1 9.3-18.8C9.3-12.3 1.6-4.3 0 0Z" fill="#f0820f"/>
<path transform="translate(1297 480.9)" d="M0 0C-1.6-4.3-9.3-12.3-9.3-18.8A9.3 9.3 0 1 1 9.3-18.8C9.3-12.3 1.6-4.3 0 0Z" fill="#f0820f"/>
<path transform="translate(1038.3 488.7)" d="M0 0C-1.6-4.3-9.3-12.3-9.3-18.8A9.3 9.3 0 1 1 9.3-18.8C9.3-12.3 1.6-4.3 0 0Z" fill="#b2f120"/>
<path transform="translate(1245.8 490.2)" d="M0 0C-1.6-4.3-9.3-12.3-9.3-18.8A9.3 9.3 0 1 1 9.3-18.8C9.3-12.3 1.6-4.3 0 0Z" fill="#f0820f"/>
<path transform="translate(1180 496)" d="M0 0C-1.6-4.3-9.3-12.3-9.3-18.8A9.3 9.3 0 1 1 9.3-18.8C9.3-12.3 1.6-4.3 0 0Z" fill="#f0820f"/>
<path transform="translate(1292.3 496.8)" d="M0 0C-1.6-4.3-9.3-12.3-9.3-18.8A9.3 9.3 0 1 1 9.3-18.8C9.3-12.3 1.6-4.3 0 0Z" fill="#f0820f"/>
<path transform="translate(1207.6 500)" d="M0 0C-1.6-4.3-9.3-12.3-9.3-18.8A9.3 9.3 0 1 1 9.3-18.8C9.3-12.3 1.6-4.3 0 0Z" fill="#b2f120"/>
<path transform="translate(1122.9 504.5)" d="M0 0C-1.6-4.3-9.3-12.3-9.3-18.8A9.3 9.3 0 1 1 9.3-18.8C9.3-12.3 1.6-4.3 0 0Z" fill="#f0820f"/>
<path transform="translate(1088.6 505)" d="M0 0C-1.6-4.3-9.3-12.3-9.3-18.8A9.3 9.3 0 1 1 9.3-18.8C9.3-12.3 1.6-4.3 0 0Z" fill="#f0820f"/>
<path transform="translate(1279.8 509.8)" d="M0 0C-1.6-4.3-9.3-12.3-9.3-18.8A9.3 9.3 0 1 1 9.3-18.8C9.3-12.3 1.6-4.3 0 0Z" fill="#f0820f"/>
<path transform="translate(1262.1 515.9)" d="M0 0C-1.6-4.3-9.3-12.3-9.3-18.8A9.3 9.3 0 1 1 9.3-18.8C9.3-12.3 1.6-4.3 0 0Z" fill="#f0820f"/>
<path transform="translate(1243 516.7)" d="M0 0C-1.6-4.3-9.3-12.3-9.3-18.8A9.3 9.3 0 1 1 9.3-18.8C9.3-12.3 1.6-4.3 0 0Z" fill="#f0820f"/>
<path transform="translate(1224.8 518.2)" d="M0 0C-1.6-4.3-9.3-12.3-9.3-18.8A9.3 9.3 0 1 1 9.3-18.8C9.3-12.3 1.6-4.3 0 0Z" fill="#f0820f"/>
<path transform="translate(1168 528.3)" d="M0 0C-1.6-4.3-9.3-12.3-9.3-18.8A9.3 9.3 0 1 1 9.3-18.8C9.3-12.3 1.6-4.3 0 0Z" fill="#b2f120"/>
<path transform="translate(1207.1 528.8)" d="M0 0C-1.6-4.3-9.3-12.3-9.3-18.8A9.3 9.3 0 1 1 9.3-18.8C9.3-12.3 1.6-4.3 0 0Z" fill="#f0820f"/>
<path transform="translate(1275.8 550)" d="M0 0C-1.6-4.3-9.3-12.3-9.3-18.8A9.3 9.3 0 1 1 9.3-18.8C9.3-12.3 1.6-4.3 0 0Z" fill="#b2f120"/>
</svg>
<div class="abs" style="left:1240.5px;top:188px;width:221.5px;height:17.5px;background:rgba(255,255,255,0.72);font-size:12.1px;line-height:17px;color:#333;white-space:nowrap;padding-left:5.2px"><span style="color:#0b79aa">Leaflet</span> | © OpenStreetMap contributors</div>
<div class="dot" style="left:1004.3px;top:777.9px;width:14.8px;height:14.8px;background:#d5fbfd"></div><div class="legtxt" style="left:1029.3px;top:777.5px;font-size:12.2px">0</div>
<div class="dot" style="left:1058.1px;top:777.9px;width:14.8px;height:14.8px;background:#4f81a8"></div><div class="legtxt" style="left:1078.5px;top:777.5px;font-size:12.2px">80M</div>
<div class="dot" style="left:1120.2px;top:777.9px;width:14.8px;height:14.8px;background:#14426a"></div><div class="legtxt" style="left:1141.7px;top:777.5px;font-size:12.2px">160M</div>
<div class="dot" style="left:1189.3px;top:777.9px;width:14.8px;height:14.8px;background:#14426a"></div><div class="legtxt" style="left:1210.5px;top:777.5px;font-size:12.2px">240M</div>
<div class="dot" style="left:1258.8px;top:777.9px;width:14.8px;height:14.8px;background:#14426a"></div><div class="legtxt" style="left:1280.3px;top:777.5px;font-size:12.2px">320M</div>
<div class="dot" style="left:1328.7px;top:777.9px;width:14.8px;height:14.8px;background:#14426a"></div><div class="legtxt" style="left:1349.8px;top:777.5px;font-size:12.2px">400M</div>
<div class="dot" style="left:1037.3px;top:815.7px;width:5.2px;height:5.2px;background:#e37d8d"></div><div class="legtxt" style="left:1052.9px;top:810.5px;font-size:12.2px">0</div>
<div class="dot" style="left:1070.2px;top:813.3px;width:10px;height:10px;background:#e37d8d"></div><div class="legtxt" style="left:1086px;top:810.5px;font-size:12.2px">20M</div>
<div class="dot" style="left:1116.1px;top:811.3px;width:14px;height:14px;background:#e37d8d"></div><div class="legtxt" style="left:1136.1px;top:810.5px;font-size:12.2px">40M</div>
<div class="dot" style="left:1165.8px;top:809.7px;width:17.2px;height:17.2px;background:#e37d8d"></div><div class="legtxt" style="left:1188.2px;top:810.5px;font-size:12.2px">60M</div>
<div class="dot" style="left:1218.8px;top:807.7px;width:21.2px;height:21.2px;background:#e37d8d"></div><div class="legtxt" style="left:1245px;top:810.5px;font-size:12.2px">80M</div>
<div class="dot" style="left:1275.7px;top:806.2px;width:24.2px;height:24.2px;background:#e37d8d"></div><div class="legtxt" style="left:1305.2px;top:810.5px;font-size:12.2px">100M</div>
<div class="abs" style="left:1421.8px;top:768px;width:28.8px;height:56px;background:#fff;border-radius:4px;box-shadow:0 1px 5px rgba(0,0,0,0.6)"><div class="abs" style="left:0;top:27px;width:28px;height:1px;background:#ccc"></div><div class="abs zb" style="left:0;top:0">+</div><div class="abs zb" style="left:0;top:28px">&minus;</div></div>
<svg style="left:1456px;top:808px" width="32" height="32" viewBox="1456 808 32 32"><g opacity="0.8"><path d="M1472 811.5l12.6 11.3q.9.9 0 1.8l-9.4 9.4q-.9.9-1.8 0l-13.9-12.6q-.8-.8 0-1.7l9-8.2q1.7-1.6 3.500 0z" fill="#c4c4c4"/><path d="M1466.6 823.8l7.400-7.4M1470.4 827.2l4.800-4.800M1473.8 830l1.200-1.200" stroke="#fff" stroke-width="2.300" stroke-linecap="round"/></g></svg>
<div class="sb" style="left:1486px;top:132px;width:20px;height:725px"><div class="tri" style="left:6.4px;top:5px;border-bottom:4.5px solid #a3a3a3"></div><div class="thumb" style="left:2px;top:21px;width:17px;height:69px"></div><div class="tri" style="left:6.4px;top:713px;border-top:4.5px solid #505050"></div></div>
<div id="frame"></div>
</body></html>
